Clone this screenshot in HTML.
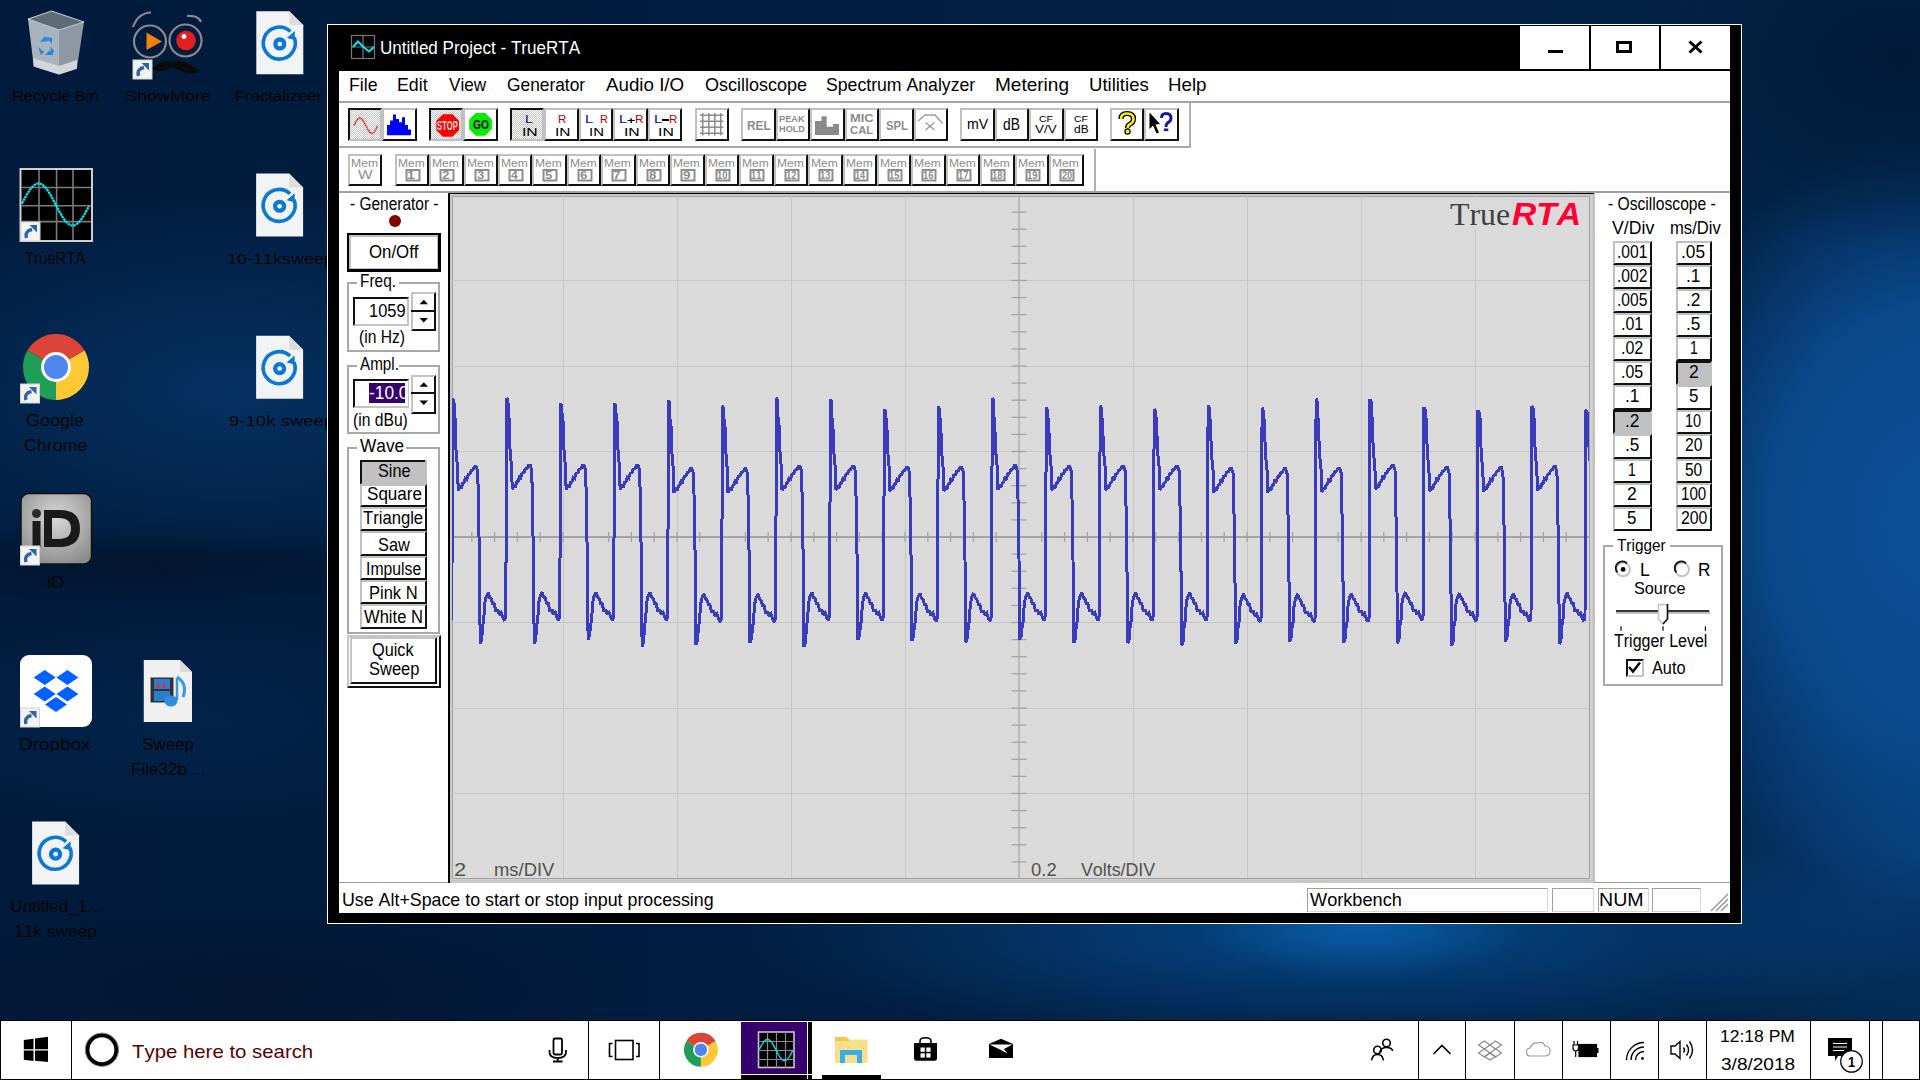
<!DOCTYPE html><html><head><meta charset="utf-8"><title>TrueRTA</title><style>
*{box-sizing:border-box;margin:0;padding:0}
html,body{width:1920px;height:1080px;overflow:hidden}
body{position:relative;font-family:'Liberation Sans',sans-serif;font-kerning:none;
background:
 radial-gradient(ellipse 170px 55px at 1365px 925px, rgba(10,100,178,0.75), rgba(10,100,178,0) 100%),
 radial-gradient(ellipse 600px 115px at 1340px 935px, rgba(5,72,136,0.95), rgba(5,72,136,0) 100%),
 radial-gradient(ellipse 280px 190px at 1900px 60px, rgba(2,26,56,1), rgba(2,26,56,0) 100%),
 radial-gradient(ellipse 300px 390px at 1935px 520px, rgba(12,80,152,1) 0%, rgba(11,76,146,0.9) 55%, rgba(8,60,120,0) 100%),
 radial-gradient(ellipse 300px 230px at 1920px 850px, rgba(6,62,120,0.9), rgba(6,62,120,0) 100%),
 radial-gradient(ellipse 330px 40px at 160px 565px, rgba(1,18,40,0.75), rgba(1,18,40,0) 100%),
 radial-gradient(ellipse 420px 200px at 230px 390px, rgba(5,50,100,0.95), rgba(5,50,100,0) 100%),
 radial-gradient(ellipse 320px 110px at 170px 720px, rgba(3,38,78,0.8), rgba(3,38,78,0) 100%),
 radial-gradient(ellipse 380px 90px at 250px 990px, rgba(1,20,44,0.8), rgba(1,20,44,0) 100%),
 linear-gradient(90deg, #021b3c 0%, #021d40 45%, #022448 100%);}
.t{position:absolute;white-space:nowrap;transform-origin:0 0;font-family:'Liberation Sans',sans-serif;font-kerning:none}
.r{position:absolute}
.ov{position:absolute;left:0;top:0;width:1920px;height:1080px;overflow:visible}
</style></head><body><svg class="ov" width="1920" height="1080" viewBox="0 0 1920 1080"><path d="M28 19 L51.5 11 L84 22 L59 30 Z" fill="#5f6b78"/><path d="M28 19 L59 30 L59 74.5 L33.8 66.5 Z" fill="#a9b3bd"/><path d="M59 30 L84 22 L76.8 68.8 L59 74.5 Z" fill="#8e98a3"/><path d="M33 58 L59 66 L77 60 L76.8 68.8 L59 74.5 L33.8 66.5 Z" fill="#d2d6da"/><path d="M28 19 L51.5 11 L84 22 L59 30 Z" fill="none" stroke="#c9d0d6" stroke-width="1"/><g fill="#1e88e5"><path d="M40 42 L45 36 L49 41 Z"/><path d="M46 37 L52 38 L52 44 Z"/><path d="M38 47 L44 52 L41 55 Z"/><path d="M45 55 L53 55 L50 50 Z"/><path d="M50 46 L54 51 L52 55 Z"/></g><g fill="none" stroke="#8a8a8a" stroke-width="2.2"><circle cx="150" cy="41.5" r="16"/><circle cx="185.5" cy="40.5" r="16"/><path d="M133 27 Q138 13 151 12.5"/><path d="M187 16 Q198 15 201 22"/></g><path d="M146.5 32.5 L162 41.5 L146.5 50 Z" fill="#f0820a"/><circle cx="186" cy="40.5" r="9.8" fill="#e02020"/><circle cx="184" cy="36.5" r="2.4" fill="#fff"/><path d="M152 68 Q165 58 172 63 Q180 58 192 66 Q199 72 202 69 Q196 76 184 72 Q176 69 172 67 Q165 73 152 70 Z" fill="#0a0a0a"/><rect x="133.0" y="60.0" width="19" height="19" fill="#f3f3f3" stroke="#d4d4d4" stroke-width="1"/><path d="M138.5 76.0 Q136.5 69.0 144.0 67.5" fill="none" stroke="#2f62ad" stroke-width="3.4"/><path d="M141.5 63.0 L149.0 63.0 L149.0 70.5 Z" fill="#2f62ad"/><path d="M256.3 11.2 L289.3 11.2 L303.3 25.2 L303.3 74.2 L256.3 74.2 Z" fill="#f2f3f5"/><path d="M289.3 11.2 L289.3 25.2 L303.3 25.2 Z" fill="#dcdde0"/><path d="M290.3 31.459999999999994 A16 16 0 1 0 294.3 37.459999999999994" fill="none" stroke="#0b78d6" stroke-width="3.6"/><path d="M286.8 37.959999999999994 L294.8 30.959999999999994 L294.8 39.959999999999994 Z" fill="#0b78d6"/><circle cx="279.8" cy="43.959999999999994" r="6.6" fill="#0b78d6"/><circle cx="279.8" cy="43.959999999999994" r="2.3" fill="#fff"/><path d="M256.1 173.5 L289.1 173.5 L303.1 187.5 L303.1 236.5 L256.1 236.5 Z" fill="#f2f3f5"/><path d="M289.1 173.5 L289.1 187.5 L303.1 187.5 Z" fill="#dcdde0"/><path d="M290.1 193.76 A16 16 0 1 0 294.1 199.76" fill="none" stroke="#0b78d6" stroke-width="3.6"/><path d="M286.6 200.26 L294.6 193.26 L294.6 202.26 Z" fill="#0b78d6"/><circle cx="279.6" cy="206.26" r="6.6" fill="#0b78d6"/><circle cx="279.6" cy="206.26" r="2.3" fill="#fff"/><path d="M256.1 335.8 L289.1 335.8 L303.1 349.8 L303.1 398.8 L256.1 398.8 Z" fill="#f2f3f5"/><path d="M289.1 335.8 L289.1 349.8 L303.1 349.8 Z" fill="#dcdde0"/><path d="M290.1 356.06 A16 16 0 1 0 294.1 362.06" fill="none" stroke="#0b78d6" stroke-width="3.6"/><path d="M286.6 362.56 L294.6 355.56 L294.6 364.56 Z" fill="#0b78d6"/><circle cx="279.6" cy="368.56" r="6.6" fill="#0b78d6"/><circle cx="279.6" cy="368.56" r="2.3" fill="#fff"/><path d="M32.1 821.4 L65.1 821.4 L79.1 835.4 L79.1 884.4 L32.1 884.4 Z" fill="#f2f3f5"/><path d="M65.1 821.4 L65.1 835.4 L79.1 835.4 Z" fill="#dcdde0"/><path d="M66.1 841.66 A16 16 0 1 0 70.1 847.66" fill="none" stroke="#0b78d6" stroke-width="3.6"/><path d="M62.6 848.16 L70.6 841.16 L70.6 850.16 Z" fill="#0b78d6"/><circle cx="55.6" cy="854.16" r="6.6" fill="#0b78d6"/><circle cx="55.6" cy="854.16" r="2.3" fill="#fff"/><rect x="20.5" y="169" width="71.5" height="72" fill="#000" stroke="#cfcfcf" stroke-width="2"/><g stroke="#7a7a7a" stroke-width="1.6"><line x1="39" y1="170" x2="39" y2="240"/><line x1="56.6" y1="170" x2="56.6" y2="240"/><line x1="73" y1="170" x2="73" y2="240"/><line x1="21" y1="187.5" x2="91" y2="187.5"/><line x1="21" y1="205.8" x2="91" y2="205.8"/><line x1="21" y1="221.6" x2="91" y2="221.6"/></g><polyline points="22.0,203.5 23.0,201.5 24.0,199.6 25.0,197.8 26.0,196.0 27.0,194.3 28.0,192.6 29.0,191.1 30.0,189.7 31.0,188.4 32.0,187.2 33.0,186.2 34.0,185.3 35.0,184.6 36.0,184.1 37.0,183.7 38.0,183.5 39.0,183.5 40.0,183.7 41.0,184.0 42.0,184.5 43.0,185.2 44.0,186.1 45.0,187.1 46.0,188.2 47.0,189.5 48.0,190.9 49.0,192.5 50.0,194.1 51.0,195.8 52.0,197.6 53.0,199.5 54.0,201.3 55.0,203.3 56.0,205.2 57.0,207.1 58.0,209.0 59.0,210.9 60.0,212.7 61.0,214.4 62.0,216.1 63.0,217.6 64.0,219.1 65.0,220.4 66.0,221.6 67.0,222.7 68.0,223.5 69.0,224.3 70.0,224.8 71.0,225.2 72.0,225.5 73.0,225.5 74.0,225.4 75.0,225.0 76.0,224.6 77.0,223.9 78.0,223.1 79.0,222.1 80.0,221.0 81.0,219.7 82.0,218.3 83.0,216.8 84.0,215.2 85.0,213.5 86.0,211.7 87.0,209.9 88.0,208.0 89.0,206.1" fill="none" stroke="#00f0ff" stroke-width="2.2" stroke-dasharray="2.5 0.6"/><rect x="21.0" y="222.0" width="19" height="19" fill="#f3f3f3" stroke="#d4d4d4" stroke-width="1"/><path d="M26.5 238.0 Q24.5 231.0 32.0 229.5" fill="none" stroke="#2f62ad" stroke-width="3.4"/><path d="M29.5 225.0 L37.0 225.0 L37.0 232.5 Z" fill="#2f62ad"/><path d="M56 367 L27.42 350.50 A33 33 0 0 1 84.58 350.50 Z" fill="#db4437"/><path d="M56 367 L84.58 350.50 A33 33 0 0 1 56.00 400.00 Z" fill="#fcc934"/><path d="M56 367 L56.00 400.00 A33 33 0 0 1 27.42 350.50 Z" fill="#1e9e57"/><circle cx="56" cy="367" r="15" fill="#fff"/><circle cx="56" cy="367" r="12" fill="#4f86ec"/><rect x="20.5" y="384.0" width="19" height="19" fill="#f3f3f3" stroke="#d4d4d4" stroke-width="1"/><path d="M26 400.0 Q24 393.0 31.5 391.5" fill="none" stroke="#2f62ad" stroke-width="3.4"/><path d="M29 387.0 L36.5 387.0 L36.5 394.5 Z" fill="#2f62ad"/><defs><radialGradient id="idg" cx="0.5" cy="0.35" r="0.7"><stop offset="0" stop-color="#d8d8d8"/><stop offset="1" stop-color="#8c8c8c"/></radialGradient></defs><rect x="21" y="493.5" width="70.5" height="70.5" rx="8" fill="url(#idg)" stroke="#111" stroke-width="1.5"/><circle cx="36.5" cy="513.5" r="4.5" fill="#2a2a2a"/><rect x="32.5" y="521" width="8" height="26" fill="#1a1a1a"/><path d="M44 510 L60 510 Q80 510 80 528.5 Q80 547 60 547 L44 547 Z M52 518 L52 539 L59 539 Q71 539 71 528.5 Q71 518 59 518 Z" fill="#1a1a1a" fill-rule="evenodd"/><rect x="20.5" y="546.0" width="19" height="19" fill="#f3f3f3" stroke="#d4d4d4" stroke-width="1"/><path d="M26 562.0 Q24 555.0 31.5 553.5" fill="none" stroke="#2f62ad" stroke-width="3.4"/><path d="M29 549.0 L36.5 549.0 L36.5 556.5 Z" fill="#2f62ad"/><rect x="20" y="655" width="72" height="72" rx="9" fill="#fff"/><path d="M33.7 677.5 L44.7 670.0 L55.7 677.5 L44.7 685.0 Z" fill="#0061fe"/><path d="M56.400000000000006 677.5 L67.4 670.0 L78.4 677.5 L67.4 685.0 Z" fill="#0061fe"/><path d="M33.7 694 L44.7 686.5 L55.7 694 L44.7 701.5 Z" fill="#0061fe"/><path d="M56.400000000000006 694 L67.4 686.5 L78.4 694 L67.4 701.5 Z" fill="#0061fe"/><path d="M45 704.6 L56 697.1 L67 704.6 L56 712.1 Z" fill="#0061fe"/><rect x="20.5" y="708.0" width="19" height="19" fill="#f3f3f3" stroke="#d4d4d4" stroke-width="1"/><path d="M26 724.0 Q24 717.0 31.5 715.5" fill="none" stroke="#2f62ad" stroke-width="3.4"/><path d="M29 711.0 L36.5 711.0 L36.5 718.5 Z" fill="#2f62ad"/><path d="M143.75 660 L180.0 660 L192.0 672 L192.0 722 L143.75 722 Z" fill="#f0f0f0"/><path d="M180.0 660 L180.0 672 L192.0 672 Z" fill="#dadada"/><rect x="150.5" y="677.5" width="23" height="25" fill="#333"/><rect x="154" y="679" width="16" height="10" fill="#2a7fd0"/><rect x="154" y="691" width="16" height="10" fill="#2a7fd0"/><path d="M156 688 L158 683 L160 688 Z M162 688 L164 681 L166 688 Z" fill="#e03030"/><path d="M177 678 L177 700" stroke="#3a9ae0" stroke-width="2.5"/><path d="M177 677 Q188 684 183 697" fill="none" stroke="#3a9ae0" stroke-width="3"/><ellipse cx="171" cy="701" rx="6.5" ry="5.5" fill="#2f8fdc"/></svg>
<div class="t" style="left:12.40px;top:88.49px;font-size:15.36px;line-height:15.36px;color:#050505;transform:scaleX(1.0684);">Recycle Bin</div>
<div class="t" style="left:125.18px;top:88.49px;font-size:15.36px;line-height:15.36px;color:#050505;transform:scaleX(1.1700);">ShowMore</div>
<div class="t" style="left:235.13px;top:88.39px;font-size:15.36px;line-height:15.36px;color:#050505;transform:scaleX(1.0859);">Fractalizeer</div>
<div class="t" style="left:25.17px;top:249.91px;font-size:16.06px;line-height:16.06px;color:#050505;transform:scaleX(0.9281);">TrueRTA</div>
<div class="t" style="left:226.63px;top:250.79px;font-size:15.36px;line-height:15.36px;color:#050505;transform:scaleX(1.1723);">10-11ksweep</div>
<div class="t" style="left:25.69px;top:412.11px;font-size:16.06px;line-height:16.06px;color:#050505;transform:scaleX(1.1219);">Google</div>
<div class="t" style="left:23.70px;top:436.81px;font-size:16.06px;line-height:16.06px;color:#050505;transform:scaleX(1.1080);">Chrome</div>
<div class="t" style="left:228.53px;top:412.79px;font-size:15.36px;line-height:15.36px;color:#050505;transform:scaleX(1.2083);">9-10k sweep</div>
<div class="t" style="left:46.59px;top:574.31px;font-size:16.06px;line-height:16.06px;color:#050505;transform:scaleX(1.1258);">iD</div>
<div class="t" style="left:19.25px;top:736.21px;font-size:16.06px;line-height:16.06px;color:#050505;transform:scaleX(1.1770);">Dropbox</div>
<div class="t" style="left:141.63px;top:736.21px;font-size:16.06px;line-height:16.06px;color:#050505;transform:scaleX(1.0607);">Sweep</div>
<div class="t" style="left:130.60px;top:760.91px;font-size:16.06px;line-height:16.06px;color:#050505;transform:scaleX(1.0628);">File32b ...</div>
<div class="t" style="left:9.67px;top:898.31px;font-size:16.06px;line-height:16.06px;color:#050505;transform:scaleX(1.0698);">Untitled_1...</div>
<div class="t" style="left:14.28px;top:922.91px;font-size:16.06px;line-height:16.06px;color:#050505;transform:scaleX(1.0816);">11k sweep</div>
<div class="r" style="left:327px;top:24px;width:1415px;height:900px;background:#000;border:1px solid #fff;"></div>
<div class="r" style="left:339px;top:71px;width:1391px;height:842px;background:#fff;"></div>
<div class="r" style="left:1520px;top:26px;width:69px;height:43px;background:#fff;"></div>
<div class="r" style="left:1591px;top:26px;width:68px;height:43px;background:#fff;"></div>
<div class="r" style="left:1661px;top:26px;width:69px;height:43px;background:#fff;"></div>
<div class="r" style="left:1548px;top:50px;width:15px;height:3px;background:#000;"></div>
<div class="r" style="left:1616px;top:41px;width:16px;height:12px;border:3px solid #000;"></div>
<div class="t" style="left:379.58px;top:39.82px;font-size:17.60px;line-height:17.60px;color:#fff;transform:scaleX(0.9700);">Untitled Project - TrueRTA</div>
<div class="t" style="left:348.85px;top:76.31px;font-size:18.44px;line-height:18.44px;color:#000;transform:scaleX(0.9607);">File</div>
<div class="t" style="left:396.54px;top:76.31px;font-size:18.44px;line-height:18.44px;color:#000;transform:scaleX(0.9628);">Edit</div>
<div class="t" style="left:448.72px;top:76.31px;font-size:18.44px;line-height:18.44px;color:#000;transform:scaleX(0.9293);">View</div>
<div class="t" style="left:506.93px;top:76.31px;font-size:18.44px;line-height:18.44px;color:#000;transform:scaleX(0.9404);">Generator</div>
<div class="t" style="left:606.26px;top:76.31px;font-size:18.44px;line-height:18.44px;color:#000;transform:scaleX(1.0166);">Audio I/O</div>
<div class="t" style="left:704.75px;top:76.31px;font-size:18.44px;line-height:18.44px;color:#000;transform:scaleX(0.9765);">Oscilloscope</div>
<div class="t" style="left:825.80px;top:76.31px;font-size:18.44px;line-height:18.44px;color:#000;transform:scaleX(0.9580);">Spectrum Analyzer</div>
<div class="t" style="left:994.74px;top:76.31px;font-size:18.44px;line-height:18.44px;color:#000;transform:scaleX(1.0315);">Metering</div>
<div class="t" style="left:1088.57px;top:76.31px;font-size:18.44px;line-height:18.44px;color:#000;transform:scaleX(1.0048);">Utilities</div>
<div class="t" style="left:1167.67px;top:76.31px;font-size:18.44px;line-height:18.44px;color:#000;transform:scaleX(1.0132);">Help</div>
<div class="r" style="left:339px;top:101px;width:1391px;height:2px;background:#a3a3a3;"></div>
<div class="r" style="left:339px;top:146px;width:851px;height:2px;background:#a8a8a8;"></div>
<div class="r" style="left:1189px;top:103px;width:2px;height:45px;background:#b0b0b0;"></div>
<div class="r" style="left:1094px;top:149px;width:2px;height:43px;background:#b0b0b0;"></div>
<div class="r" style="left:339px;top:191px;width:1391px;height:2px;background:#a0a0a0;"></div>
<div class="r" style="left:348px;top:108px;width:34px;height:33px;background-color:#fff;background-image:repeating-conic-gradient(#c4c4c4 0 25%, #fff 0 50%);background-size:2px 2px;border-style:solid;border-width:2px;border-color:#111 #c0c0c0 #c0c0c0 #111;"></div>
<div class="r" style="left:382px;top:108px;width:35px;height:33px;background:#fff;border-style:solid;border-width:2px;border-color:#c0c0c0 #111 #111 #c0c0c0;"></div>
<div class="r" style="left:429px;top:108px;width:34px;height:33px;background-color:#fff;background-image:repeating-conic-gradient(#c4c4c4 0 25%, #fff 0 50%);background-size:2px 2px;border-style:solid;border-width:2px;border-color:#111 #c0c0c0 #c0c0c0 #111;"></div>
<div class="r" style="left:463px;top:108px;width:35px;height:33px;background:#fff;border-style:solid;border-width:2px;border-color:#c0c0c0 #111 #111 #c0c0c0;"></div>
<div class="r" style="left:510px;top:108px;width:34px;height:33px;background-color:#fff;background-image:repeating-conic-gradient(#c4c4c4 0 25%, #fff 0 50%);background-size:2px 2px;border-style:solid;border-width:2px;border-color:#111 #c0c0c0 #c0c0c0 #111;"></div>
<div class="r" style="left:544px;top:108px;width:35px;height:33px;background:#fff;border-style:solid;border-width:2px;border-color:#c0c0c0 #111 #111 #c0c0c0;"></div>
<div class="r" style="left:579px;top:108px;width:34px;height:33px;background:#fff;border-style:solid;border-width:2px;border-color:#c0c0c0 #111 #111 #c0c0c0;"></div>
<div class="r" style="left:613px;top:108px;width:35px;height:33px;background:#fff;border-style:solid;border-width:2px;border-color:#c0c0c0 #111 #111 #c0c0c0;"></div>
<div class="r" style="left:648px;top:108px;width:34px;height:33px;background:#fff;border-style:solid;border-width:2px;border-color:#c0c0c0 #111 #111 #c0c0c0;"></div>
<div class="r" style="left:695px;top:108px;width:34px;height:33px;background:#fff;border-style:solid;border-width:2px;border-color:#c0c0c0 #111 #111 #c0c0c0;"></div>
<div class="r" style="left:741px;top:108px;width:35px;height:33px;background:#fff;border-style:solid;border-width:2px;border-color:#c0c0c0 #111 #111 #c0c0c0;"></div>
<div class="r" style="left:776px;top:108px;width:34px;height:33px;background:#fff;border-style:solid;border-width:2px;border-color:#c0c0c0 #111 #111 #c0c0c0;"></div>
<div class="r" style="left:810px;top:108px;width:35px;height:33px;background:#fff;border-style:solid;border-width:2px;border-color:#c0c0c0 #111 #111 #c0c0c0;"></div>
<div class="r" style="left:845px;top:108px;width:34px;height:33px;background:#fff;border-style:solid;border-width:2px;border-color:#c0c0c0 #111 #111 #c0c0c0;"></div>
<div class="r" style="left:879px;top:108px;width:35px;height:33px;background:#fff;border-style:solid;border-width:2px;border-color:#c0c0c0 #111 #111 #c0c0c0;"></div>
<div class="r" style="left:914px;top:108px;width:34px;height:33px;background:#fff;border-style:solid;border-width:2px;border-color:#c0c0c0 #111 #111 #c0c0c0;"></div>
<div class="r" style="left:960px;top:108px;width:35px;height:33px;background:#fff;border-style:solid;border-width:2px;border-color:#c0c0c0 #111 #111 #c0c0c0;"></div>
<div class="r" style="left:995px;top:108px;width:34px;height:33px;background:#fff;border-style:solid;border-width:2px;border-color:#c0c0c0 #111 #111 #c0c0c0;"></div>
<div class="r" style="left:1029px;top:108px;width:35px;height:33px;background:#fff;border-style:solid;border-width:2px;border-color:#c0c0c0 #111 #111 #c0c0c0;"></div>
<div class="r" style="left:1064px;top:108px;width:34px;height:33px;background:#fff;border-style:solid;border-width:2px;border-color:#c0c0c0 #111 #111 #c0c0c0;"></div>
<div class="r" style="left:1110px;top:108px;width:34px;height:33px;background:#fff;border-style:solid;border-width:2px;border-color:#c0c0c0 #111 #111 #c0c0c0;"></div>
<div class="r" style="left:1144px;top:108px;width:35px;height:33px;background:#fff;border-style:solid;border-width:2px;border-color:#c0c0c0 #111 #111 #c0c0c0;"></div>
<div class="r" style="left:348px;top:154px;width:34px;height:32px;background:#fff;border-style:solid;border-width:2px;border-color:#c0c0c0 #111 #111 #c0c0c0;"></div>
<div class="r" style="left:395px;top:154px;width:34px;height:32px;background:#fff;border-style:solid;border-width:2px;border-color:#c0c0c0 #111 #111 #c0c0c0;"></div>
<div class="r" style="left:429px;top:154px;width:35px;height:32px;background:#fff;border-style:solid;border-width:2px;border-color:#c0c0c0 #111 #111 #c0c0c0;"></div>
<div class="r" style="left:464px;top:154px;width:34px;height:32px;background:#fff;border-style:solid;border-width:2px;border-color:#c0c0c0 #111 #111 #c0c0c0;"></div>
<div class="r" style="left:498px;top:154px;width:34px;height:32px;background:#fff;border-style:solid;border-width:2px;border-color:#c0c0c0 #111 #111 #c0c0c0;"></div>
<div class="r" style="left:532px;top:154px;width:35px;height:32px;background:#fff;border-style:solid;border-width:2px;border-color:#c0c0c0 #111 #111 #c0c0c0;"></div>
<div class="r" style="left:567px;top:154px;width:34px;height:32px;background:#fff;border-style:solid;border-width:2px;border-color:#c0c0c0 #111 #111 #c0c0c0;"></div>
<div class="r" style="left:601px;top:154px;width:35px;height:32px;background:#fff;border-style:solid;border-width:2px;border-color:#c0c0c0 #111 #111 #c0c0c0;"></div>
<div class="r" style="left:636px;top:154px;width:34px;height:32px;background:#fff;border-style:solid;border-width:2px;border-color:#c0c0c0 #111 #111 #c0c0c0;"></div>
<div class="r" style="left:670px;top:154px;width:35px;height:32px;background:#fff;border-style:solid;border-width:2px;border-color:#c0c0c0 #111 #111 #c0c0c0;"></div>
<div class="r" style="left:705px;top:154px;width:34px;height:32px;background:#fff;border-style:solid;border-width:2px;border-color:#c0c0c0 #111 #111 #c0c0c0;"></div>
<div class="r" style="left:739px;top:154px;width:35px;height:32px;background:#fff;border-style:solid;border-width:2px;border-color:#c0c0c0 #111 #111 #c0c0c0;"></div>
<div class="r" style="left:774px;top:154px;width:34px;height:32px;background:#fff;border-style:solid;border-width:2px;border-color:#c0c0c0 #111 #111 #c0c0c0;"></div>
<div class="r" style="left:808px;top:154px;width:35px;height:32px;background:#fff;border-style:solid;border-width:2px;border-color:#c0c0c0 #111 #111 #c0c0c0;"></div>
<div class="r" style="left:843px;top:154px;width:34px;height:32px;background:#fff;border-style:solid;border-width:2px;border-color:#c0c0c0 #111 #111 #c0c0c0;"></div>
<div class="r" style="left:877px;top:154px;width:34px;height:32px;background:#fff;border-style:solid;border-width:2px;border-color:#c0c0c0 #111 #111 #c0c0c0;"></div>
<div class="r" style="left:911px;top:154px;width:35px;height:32px;background:#fff;border-style:solid;border-width:2px;border-color:#c0c0c0 #111 #111 #c0c0c0;"></div>
<div class="r" style="left:946px;top:154px;width:34px;height:32px;background:#fff;border-style:solid;border-width:2px;border-color:#c0c0c0 #111 #111 #c0c0c0;"></div>
<div class="r" style="left:980px;top:154px;width:35px;height:32px;background:#fff;border-style:solid;border-width:2px;border-color:#c0c0c0 #111 #111 #c0c0c0;"></div>
<div class="r" style="left:1015px;top:154px;width:34px;height:32px;background:#fff;border-style:solid;border-width:2px;border-color:#c0c0c0 #111 #111 #c0c0c0;"></div>
<div class="r" style="left:1049px;top:154px;width:35px;height:32px;background:#fff;border-style:solid;border-width:2px;border-color:#c0c0c0 #111 #111 #c0c0c0;"></div>
<div class="t" style="left:350.21px;top:195.27px;font-size:18.02px;line-height:18.02px;color:#000;transform:scaleX(0.8579);">- Generator -</div>
<div class="r" style="left:388.5px;top:214.8px;width:12px;height:12px;border-radius:50%;background:#800000"></div>
<div class="r" style="left:347px;top:233px;width:94px;height:39px;background:#fff;border-style:solid;border-color:#000;border-width:2px 3px 3px 2px;box-shadow:inset 2px 2px 0 #c0c0c0, inset -1px -1px 0 #c0c0c0;"></div>
<div class="t" style="left:369.20px;top:242.91px;font-size:18.85px;line-height:18.85px;color:#000;transform:scaleX(0.8927);">On/Off</div>
<div class="r" style="left:347px;top:282px;width:93px;height:70px;border:2px solid #a8a8a8;"></div>
<div class="r" style="left:357px;top:281px;width:42px;height:4px;background:#fff;"></div>
<div class="t" style="left:360.03px;top:273.28px;font-size:17.88px;line-height:17.88px;color:#000;transform:scaleX(0.8647);">Freq.</div>
<div class="r" style="left:353px;top:297px;width:56px;height:29px;background:#fff;border-style:solid;border-width:2px;border-color:#111 #c4c4c4 #c4c4c4 #111;"></div>
<div class="t" style="left:369.25px;top:301.51px;font-size:18.44px;line-height:18.44px;color:#000;transform:scaleX(0.8907);">1059</div>
<div class="r" style="left:411px;top:292px;width:25px;height:39px;background:#fff;border-style:solid;border-width:2px;border-color:#c4c4c4 #111 #111 #c4c4c4;"></div>
<div class="r" style="left:411px;top:309.5px;width:25px;height:2px;background:#111;"></div>
<div class="r" style="left:347px;top:365px;width:93px;height:69px;border:2px solid #a8a8a8;"></div>
<div class="r" style="left:357px;top:364px;width:42px;height:4px;background:#fff;"></div>
<div class="t" style="left:359.97px;top:355.74px;font-size:17.46px;line-height:17.46px;color:#000;transform:scaleX(0.8745);">Ampl.</div>
<div class="r" style="left:353px;top:379px;width:56px;height:29px;background:#fff;border-style:solid;border-width:2px;border-color:#111 #c4c4c4 #c4c4c4 #111;"></div>
<div class="r" style="left:369px;top:383px;width:35.5px;height:19.5px;background:#36006e;"></div>
<div class="t" style="left:369.23px;top:384.72px;font-size:17.60px;line-height:17.60px;color:#fff;transform:scaleX(0.9834);clip-path:inset(0 0 0 0);">-10.0</div>
<div class="r" style="left:404.5px;top:381px;width:3px;height:25px;background:#fff;"></div>
<div class="r" style="left:411px;top:374.5px;width:25px;height:39px;background:#fff;border-style:solid;border-width:2px;border-color:#c4c4c4 #111 #111 #c4c4c4;"></div>
<div class="r" style="left:411px;top:392px;width:25px;height:2px;background:#111;"></div>
<div class="t" style="left:358.73px;top:329.09px;font-size:17.46px;line-height:17.46px;color:#000;transform:scaleX(0.8957);">(in Hz)</div>
<div class="t" style="left:352.83px;top:411.59px;font-size:17.46px;line-height:17.46px;color:#000;transform:scaleX(0.8980);">(in dBu)</div>
<div class="r" style="left:347px;top:447px;width:93px;height:187px;border:2px solid #a8a8a8;"></div>
<div class="r" style="left:357px;top:446px;width:49px;height:4px;background:#fff;"></div>
<div class="t" style="left:360.32px;top:438.38px;font-size:17.88px;line-height:17.88px;color:#000;transform:scaleX(0.9660);">Wave</div>
<div class="r" style="left:360px;top:460px;width:67px;height:25px;background:#c0c0c0;border-style:solid;border-width:2px;border-color:#111 #c0c0c0 #c0c0c0 #111;"></div>
<div class="r" style="left:425px;top:460px;width:2px;height:25px;background:#c0c0c0;"></div>
<div class="r" style="left:360px;top:484px;width:67px;height:23px;background:#fff;border-style:solid;border-width:2px;border-color:#c0c0c0 #111 #111 #c0c0c0;"></div>
<div class="r" style="left:360px;top:507px;width:67px;height:24px;background:#fff;border-style:solid;border-width:2px;border-color:#c0c0c0 #111 #111 #c0c0c0;"></div>
<div class="r" style="left:360px;top:531px;width:67px;height:25px;background:#fff;border-style:solid;border-width:2px;border-color:#c0c0c0 #111 #111 #c0c0c0;"></div>
<div class="r" style="left:360px;top:556px;width:67px;height:24px;background:#fff;border-style:solid;border-width:2px;border-color:#c0c0c0 #111 #111 #c0c0c0;"></div>
<div class="r" style="left:360px;top:580px;width:67px;height:24px;background:#fff;border-style:solid;border-width:2px;border-color:#c0c0c0 #111 #111 #c0c0c0;"></div>
<div class="r" style="left:360px;top:604px;width:67px;height:25px;background:#fff;border-style:solid;border-width:2px;border-color:#c0c0c0 #111 #111 #c0c0c0;"></div>
<div class="t" style="left:377.96px;top:462.27px;font-size:18.02px;line-height:18.02px;color:#000;transform:scaleX(0.9030);">Sine</div>
<div class="t" style="left:366.73px;top:485.47px;font-size:18.02px;line-height:18.02px;color:#000;transform:scaleX(0.9473);">Square</div>
<div class="t" style="left:362.63px;top:509.37px;font-size:18.02px;line-height:18.02px;color:#000;transform:scaleX(0.9235);">Triangle</div>
<div class="t" style="left:377.96px;top:535.77px;font-size:18.02px;line-height:18.02px;color:#000;transform:scaleX(0.9074);">Saw</div>
<div class="t" style="left:365.55px;top:559.67px;font-size:18.02px;line-height:18.02px;color:#000;transform:scaleX(0.8743);">Impulse</div>
<div class="t" style="left:368.65px;top:583.62px;font-size:18.02px;line-height:18.02px;color:#000;transform:scaleX(0.9158);">Pink N</div>
<div class="t" style="left:364.43px;top:607.57px;font-size:18.02px;line-height:18.02px;color:#000;transform:scaleX(0.9197);">White N</div>
<div class="r" style="left:347px;top:635px;width:94px;height:53px;background:#fff;border-style:solid;border-width:2px;border-color:#c4c4c4 #111 #111 #c4c4c4;"></div>
<div class="r" style="left:350px;top:637px;width:87px;height:47px;border-style:solid;border-width:2px;border-color:#c4c4c4 #111 #111 #c4c4c4;"></div>
<div class="t" style="left:372.23px;top:640.87px;font-size:18.02px;line-height:18.02px;color:#000;transform:scaleX(0.9043);">Quick</div>
<div class="t" style="left:369.25px;top:660.27px;font-size:18.02px;line-height:18.02px;color:#000;transform:scaleX(0.9157);">Sweep</div>
<div class="r" style="left:339px;top:882px;width:1391px;height:1px;background:#9a9a9a;"></div>
<div class="r" style="left:448px;top:193px;width:1146px;height:690px;background:#c6c6c6;border-left:2px solid #000;border-top:1px solid #000;"></div>
<div class="r" style="left:452px;top:196px;width:1138px;height:683px;background:#dadada;border-style:solid;border-width:1px;border-color:#a8a8a8 #a0a0a0 #a0a0a0 #a8a8a8;"></div>
<div class="r" style="left:1590px;top:196px;width:2px;height:686px;background:#d0d0d0;"></div>
<div class="r" style="left:452px;top:879px;width:1140px;height:1px;background:#d0d0d0;"></div>
<div class="r" style="left:1594px;top:192px;width:1px;height:690px;background:#c0c0c0;"></div>
<div class="t" style="left:1607.70px;top:195.31px;font-size:18.44px;line-height:18.44px;color:#000;transform:scaleX(0.8485);">- Oscilloscope -</div>
<div class="t" style="left:1611.52px;top:219.27px;font-size:18.02px;line-height:18.02px;color:#000;transform:scaleX(0.9813);">V/Div</div>
<div class="t" style="left:1670.20px;top:219.27px;font-size:18.02px;line-height:18.02px;color:#000;transform:scaleX(0.9222);">ms/Div</div>
<div class="r" style="left:1613px;top:241px;width:39px;height:24px;background:#fff;border-style:solid;border-width:2px;border-color:#c0c0c0 #111 #111 #c0c0c0;"></div>
<div class="r" style="left:1676px;top:241px;width:36px;height:24px;background:#fff;border-style:solid;border-width:2px;border-color:#c0c0c0 #111 #111 #c0c0c0;"></div>
<div class="r" style="left:1613px;top:265px;width:39px;height:24px;background:#fff;border-style:solid;border-width:2px;border-color:#c0c0c0 #111 #111 #c0c0c0;"></div>
<div class="r" style="left:1676px;top:265px;width:36px;height:24px;background:#fff;border-style:solid;border-width:2px;border-color:#c0c0c0 #111 #111 #c0c0c0;"></div>
<div class="r" style="left:1613px;top:289px;width:39px;height:24px;background:#fff;border-style:solid;border-width:2px;border-color:#c0c0c0 #111 #111 #c0c0c0;"></div>
<div class="r" style="left:1676px;top:289px;width:36px;height:24px;background:#fff;border-style:solid;border-width:2px;border-color:#c0c0c0 #111 #111 #c0c0c0;"></div>
<div class="r" style="left:1613px;top:313px;width:39px;height:24px;background:#fff;border-style:solid;border-width:2px;border-color:#c0c0c0 #111 #111 #c0c0c0;"></div>
<div class="r" style="left:1676px;top:313px;width:36px;height:24px;background:#fff;border-style:solid;border-width:2px;border-color:#c0c0c0 #111 #111 #c0c0c0;"></div>
<div class="r" style="left:1613px;top:337px;width:39px;height:24px;background:#fff;border-style:solid;border-width:2px;border-color:#c0c0c0 #111 #111 #c0c0c0;"></div>
<div class="r" style="left:1676px;top:337px;width:36px;height:24px;background:#fff;border-style:solid;border-width:2px;border-color:#c0c0c0 #111 #111 #c0c0c0;"></div>
<div class="r" style="left:1613px;top:361px;width:39px;height:24px;background:#fff;border-style:solid;border-width:2px;border-color:#c0c0c0 #111 #111 #c0c0c0;"></div>
<div class="r" style="left:1676px;top:361px;width:36px;height:24px;background:#c0c0c0;border-style:solid;border-width:2px;border-color:#111 #c0c0c0 #c0c0c0 #111;"></div>
<div class="r" style="left:1613px;top:385px;width:39px;height:25px;background:#fff;border-style:solid;border-width:2px;border-color:#c0c0c0 #111 #111 #c0c0c0;"></div>
<div class="r" style="left:1676px;top:385px;width:36px;height:25px;background:#fff;border-style:solid;border-width:2px;border-color:#c0c0c0 #111 #111 #c0c0c0;"></div>
<div class="r" style="left:1613px;top:410px;width:39px;height:24px;background:#c0c0c0;border-style:solid;border-width:2px;border-color:#111 #c0c0c0 #c0c0c0 #111;"></div>
<div class="r" style="left:1676px;top:410px;width:36px;height:24px;background:#fff;border-style:solid;border-width:2px;border-color:#c0c0c0 #111 #111 #c0c0c0;"></div>
<div class="r" style="left:1613px;top:434px;width:39px;height:25px;background:#fff;border-style:solid;border-width:2px;border-color:#c0c0c0 #111 #111 #c0c0c0;"></div>
<div class="r" style="left:1676px;top:434px;width:36px;height:25px;background:#fff;border-style:solid;border-width:2px;border-color:#c0c0c0 #111 #111 #c0c0c0;"></div>
<div class="r" style="left:1613px;top:459px;width:39px;height:24px;background:#fff;border-style:solid;border-width:2px;border-color:#c0c0c0 #111 #111 #c0c0c0;"></div>
<div class="r" style="left:1676px;top:459px;width:36px;height:24px;background:#fff;border-style:solid;border-width:2px;border-color:#c0c0c0 #111 #111 #c0c0c0;"></div>
<div class="r" style="left:1613px;top:483px;width:39px;height:24px;background:#fff;border-style:solid;border-width:2px;border-color:#c0c0c0 #111 #111 #c0c0c0;"></div>
<div class="r" style="left:1676px;top:483px;width:36px;height:24px;background:#fff;border-style:solid;border-width:2px;border-color:#c0c0c0 #111 #111 #c0c0c0;"></div>
<div class="r" style="left:1613px;top:507px;width:39px;height:24px;background:#fff;border-style:solid;border-width:2px;border-color:#c0c0c0 #111 #111 #c0c0c0;"></div>
<div class="r" style="left:1676px;top:507px;width:36px;height:24px;background:#fff;border-style:solid;border-width:2px;border-color:#c0c0c0 #111 #111 #c0c0c0;"></div>
<div class="t" style="left:1616.72px;top:243.72px;font-size:17.60px;line-height:17.60px;color:#000;transform:scaleX(0.8904);">.001</div>
<div class="t" style="left:1681.37px;top:243.72px;font-size:17.60px;line-height:17.60px;color:#000;transform:scaleX(0.9811);">.05</div>
<div class="t" style="left:1616.72px;top:267.72px;font-size:17.60px;line-height:17.60px;color:#000;transform:scaleX(0.8911);">.002</div>
<div class="t" style="left:1686.22px;top:267.72px;font-size:17.60px;line-height:17.60px;color:#000;transform:scaleX(0.9828);">.1</div>
<div class="t" style="left:1616.72px;top:291.72px;font-size:17.60px;line-height:17.60px;color:#000;transform:scaleX(0.8870);">.005</div>
<div class="t" style="left:1686.22px;top:291.72px;font-size:17.60px;line-height:17.60px;color:#000;transform:scaleX(0.9849);">.2</div>
<div class="t" style="left:1620.84px;top:315.72px;font-size:17.60px;line-height:17.60px;color:#000;transform:scaleX(0.9092);">.01</div>
<div class="t" style="left:1686.24px;top:315.72px;font-size:17.60px;line-height:17.60px;color:#000;transform:scaleX(0.9732);">.5</div>
<div class="t" style="left:1620.84px;top:339.72px;font-size:17.60px;line-height:17.60px;color:#000;transform:scaleX(0.9103);">.02</div>
<div class="t" style="left:1689.74px;top:339.72px;font-size:17.60px;line-height:17.60px;color:#000;transform:scaleX(0.7908);">1</div>
<div class="t" style="left:1620.85px;top:363.72px;font-size:17.60px;line-height:17.60px;color:#000;transform:scaleX(0.9043);">.05</div>
<div class="t" style="left:1688.92px;top:363.72px;font-size:17.60px;line-height:17.60px;color:#000;transform:scaleX(0.9979);">2</div>
<div class="t" style="left:1624.72px;top:387.72px;font-size:17.60px;line-height:17.60px;color:#000;transform:scaleX(0.9828);">.1</div>
<div class="t" style="left:1689.12px;top:387.72px;font-size:17.60px;line-height:17.60px;color:#000;transform:scaleX(0.9588);">5</div>
<div class="t" style="left:1624.72px;top:412.72px;font-size:17.60px;line-height:17.60px;color:#000;transform:scaleX(0.9849);">.2</div>
<div class="t" style="left:1685.44px;top:412.72px;font-size:17.60px;line-height:17.60px;color:#000;transform:scaleX(0.8264);">10</div>
<div class="t" style="left:1624.74px;top:436.72px;font-size:17.60px;line-height:17.60px;color:#000;transform:scaleX(0.9732);">.5</div>
<div class="t" style="left:1685.01px;top:436.72px;font-size:17.60px;line-height:17.60px;color:#000;transform:scaleX(0.8888);">20</div>
<div class="t" style="left:1627.74px;top:461.72px;font-size:17.60px;line-height:17.60px;color:#000;transform:scaleX(0.7908);">1</div>
<div class="t" style="left:1685.18px;top:461.72px;font-size:17.60px;line-height:17.60px;color:#000;transform:scaleX(0.8800);">50</div>
<div class="t" style="left:1626.92px;top:485.72px;font-size:17.60px;line-height:17.60px;color:#000;transform:scaleX(0.9979);">2</div>
<div class="t" style="left:1680.90px;top:485.72px;font-size:17.60px;line-height:17.60px;color:#000;transform:scaleX(0.8598);">100</div>
<div class="t" style="left:1627.12px;top:509.72px;font-size:17.60px;line-height:17.60px;color:#000;transform:scaleX(0.9588);">5</div>
<div class="t" style="left:1680.50px;top:509.72px;font-size:17.60px;line-height:17.60px;color:#000;transform:scaleX(0.8996);">200</div>
<div class="r" style="left:1603px;top:545px;width:120px;height:141px;border:2px solid #a8a8a8;"></div>
<div class="r" style="left:1613px;top:540px;width:57px;height:8px;background:#fff;"></div>
<div class="t" style="left:1617.26px;top:536.82px;font-size:17.18px;line-height:17.18px;color:#000;transform:scaleX(0.8931);">Trigger</div>
<div class="t" style="left:1639.75px;top:561.62px;font-size:17.60px;line-height:17.60px;color:#000;transform:scaleX(1.0053);">L</div>
<div class="t" style="left:1698.09px;top:561.62px;font-size:17.60px;line-height:17.60px;color:#000;transform:scaleX(0.9762);">R</div>
<div class="t" style="left:1634.26px;top:580.07px;font-size:17.18px;line-height:17.18px;color:#000;transform:scaleX(0.9454);">Source</div>
<div class="t" style="left:1614.14px;top:632.52px;font-size:17.60px;line-height:17.60px;color:#000;transform:scaleX(0.9097);">Trigger Level</div>
<div class="t" style="left:1652.17px;top:658.51px;font-size:18.44px;line-height:18.44px;color:#000;transform:scaleX(0.8838);">Auto</div>
<div class="r" style="left:1625.5px;top:658.5px;width:18.5px;height:18px;background:#fff;border-style:solid;border-width:2px;border-color:#111 #c4c4c4 #c4c4c4 #111;"></div>
<div class="t" style="left:341.53px;top:891.45px;font-size:18.16px;line-height:18.16px;color:#000;transform:scaleX(0.9806);">Use Alt+Space to start or stop input processing</div>
<div class="r" style="left:1307px;top:888px;width:241px;height:24px;border-style:solid;border-width:1px;border-color:#a0a0a0 #d8d8d8 #d8d8d8 #a0a0a0;"></div>
<div class="r" style="left:1552px;top:888px;width:42px;height:24px;border-style:solid;border-width:1px;border-color:#a0a0a0 #d8d8d8 #d8d8d8 #a0a0a0;"></div>
<div class="r" style="left:1598px;top:888px;width:51px;height:24px;border-style:solid;border-width:1px;border-color:#a0a0a0 #d8d8d8 #d8d8d8 #a0a0a0;"></div>
<div class="r" style="left:1652px;top:888px;width:49px;height:24px;border-style:solid;border-width:1px;border-color:#a0a0a0 #d8d8d8 #d8d8d8 #a0a0a0;"></div>
<div class="t" style="left:1309.92px;top:891.45px;font-size:18.16px;line-height:18.16px;color:#000;transform:scaleX(1.0003);">Workbench</div>
<div class="t" style="left:1599.29px;top:891.45px;font-size:18.16px;line-height:18.16px;color:#000;transform:scaleX(1.0790);">NUM</div>
<div class="r" style="left:0px;top:1020px;width:1920px;height:60px;background:#fff;border-top:1px solid #000;border-bottom:1px solid #000;border-left:1px solid #000;"></div>
<div class="r" style="left:71px;top:1020px;width:1px;height:60px;background:#000;"></div>
<div class="r" style="left:588px;top:1020px;width:1px;height:60px;background:#000;"></div>
<div class="r" style="left:659px;top:1020px;width:1px;height:60px;background:#000;"></div>
<div class="r" style="left:1418px;top:1020px;width:1px;height:60px;background:#000;"></div>
<div class="r" style="left:1465px;top:1020px;width:1px;height:60px;background:#000;"></div>
<div class="r" style="left:1514px;top:1020px;width:1px;height:60px;background:#000;"></div>
<div class="r" style="left:1562px;top:1020px;width:1px;height:60px;background:#000;"></div>
<div class="r" style="left:1610px;top:1020px;width:1px;height:60px;background:#000;"></div>
<div class="r" style="left:1658px;top:1020px;width:1px;height:60px;background:#000;"></div>
<div class="r" style="left:1706px;top:1020px;width:1px;height:60px;background:#000;"></div>
<div class="r" style="left:1810px;top:1020px;width:1px;height:60px;background:#000;"></div>
<div class="r" style="left:1869px;top:1020px;width:1px;height:60px;background:#000;"></div>
<div class="r" style="left:1882px;top:1020px;width:1px;height:60px;background:#000;"></div>
<div class="r" style="left:1919px;top:1020px;width:1px;height:60px;background:#000;"></div>
<div class="r" style="left:741px;top:1022px;width:66px;height:52px;background:#36006e;"></div>
<div class="r" style="left:808px;top:1022px;width:4px;height:52px;background:#000;"></div>
<div class="r" style="left:741px;top:1075px;width:66px;height:4px;background:#000;"></div>
<div class="r" style="left:808px;top:1075px;width:4px;height:4px;background:#000;"></div>
<div class="r" style="left:822px;top:1075px;width:59px;height:4px;background:#000;"></div>
<div class="t" style="left:132.04px;top:1042.91px;font-size:18.85px;line-height:18.85px;color:#5c0000;transform:scaleX(1.0811);">Type here to search</div>
<div class="t" style="left:1720.37px;top:1028.15px;font-size:17.32px;line-height:17.32px;color:#000;transform:scaleX(1.0114);">12:18 PM</div>
<div class="t" style="left:1720.97px;top:1055.85px;font-size:17.32px;line-height:17.32px;color:#000;transform:scaleX(1.1000);">3/8/2018</div>
<svg class="ov" width="1920" height="1080" viewBox="0 0 1920 1080"><polyline points="354,125.5 356,121.5 358,119 360,118 362,119 364,122 366,126 368,129.5 370,132.5 372,133.5 374,132.5 376,129 377.5,125.5" fill="none" stroke="#ff1010" stroke-width="1.5" stroke-dasharray="1.6 0.5" stroke-linejoin="round"/><path d="M387 135.3 L387 125.1 L390 125.1 L390 120.4 L393 120.4 L393 114.4 L396 114.4 L396 119 L399 119 L399 122.2 L402 122.2 L402 117.3 L405 117.3 L405 125.1 L408 125.1 L408 129.6 L411 129.6 L411 135.3 Z" fill="#0000ff"/><polygon points="459.06,130.21 452.41,136.86 442.99,136.86 436.34,130.21 436.34,120.79 442.99,114.14 452.41,114.14 459.06,120.79" fill="#ff0000"/><polygon points="491.86,129.01 485.21,135.66 475.79,135.66 469.14,129.01 469.14,119.59 475.79,112.94 485.21,112.94 491.86,119.59" fill="#00ee00"/><g stroke="#8a8a8a" stroke-width="1.5"><line x1="702.7" y1="113" x2="702.7" y2="135.5"/><line x1="708.9" y1="113" x2="708.9" y2="135.5"/><line x1="714.8" y1="113" x2="714.8" y2="135.5"/><line x1="720.7" y1="113" x2="720.7" y2="135.5"/><line x1="700" y1="115.2" x2="723.5" y2="115.2"/><line x1="700" y1="121.3" x2="723.5" y2="121.3"/><line x1="700" y1="127.2" x2="723.5" y2="127.2"/><line x1="700" y1="133.3" x2="723.5" y2="133.3"/></g><path d="M815 135.1 L815 121 L821.5 121 L821.5 116.2 L826.7 116.2 L826.7 126.8 L833 126.8 L833 123.9 L839 123.9 L839 135.1 Z" fill="#8a8a8a"/><path d="M918 121 L925 115 L935 115 L942.5 123.5" fill="none" stroke="#9a9a9a" stroke-width="1.4"/><path d="M925.6 122.5 L934.4 130 M934.4 122.5 L925.6 130" stroke="#9a9a9a" stroke-width="1.4"/><path d="M1121 119 Q1121 113.5 1127 113.5 Q1133.5 113.5 1133.5 119 Q1133.5 122.5 1129.5 124.5 Q1127.5 125.5 1127.5 128" fill="none" stroke="#000" stroke-width="5.2"/><path d="M1121 119 Q1121 113.5 1127 113.5 Q1133.5 113.5 1133.5 119 Q1133.5 122.5 1129.5 124.5 Q1127.5 125.5 1127.5 128" fill="none" stroke="#ffee00" stroke-width="2.6"/><circle cx="1127.5" cy="131.5" r="2.6" fill="#ffee00" stroke="#000" stroke-width="1.2"/><path d="M1149.5 112.5 L1149.5 129 L1153 125.5 L1156.5 133.5 L1159 132.5 L1155.5 124.5 L1160 124 Z" fill="#000"/><path d="M1161.5 118 Q1161.5 113.5 1166 113.5 Q1171 113.5 1171 118 Q1171 121.5 1167.5 123 Q1166 124 1166 127" fill="none" stroke="#1a1aa0" stroke-width="3"/><rect x="1163.8" y="128.5" width="4.5" height="2.6" fill="#1a1aa0"/><path d="M1689.5 41.5 L1701.5 52.5 M1701.5 41.5 L1689.5 52.5" stroke="#000" stroke-width="3"/><rect x="351.5" y="35.5" width="23" height="23" fill="#000" stroke="#777" stroke-width="1.2"/><path d="M363 36 L363 58 M352 47 L374 47" stroke="#777" stroke-width="1.2"/><polyline points="353,47 358,41.5 364,47.5 369,51.5 374,47" fill="none" stroke="#00e8ff" stroke-width="2"/><rect x="406.5" y="170" width="13" height="10.5" fill="none" stroke="#8e8e8e" stroke-width="2"/><rect x="440.5" y="170" width="13" height="10.5" fill="none" stroke="#8e8e8e" stroke-width="2"/><rect x="475.5" y="170" width="13" height="10.5" fill="none" stroke="#8e8e8e" stroke-width="2"/><rect x="509.5" y="170" width="13" height="10.5" fill="none" stroke="#8e8e8e" stroke-width="2"/><rect x="543.5" y="170" width="13" height="10.5" fill="none" stroke="#8e8e8e" stroke-width="2"/><rect x="578.5" y="170" width="13" height="10.5" fill="none" stroke="#8e8e8e" stroke-width="2"/><rect x="612.5" y="170" width="13" height="10.5" fill="none" stroke="#8e8e8e" stroke-width="2"/><rect x="647.5" y="170" width="13" height="10.5" fill="none" stroke="#8e8e8e" stroke-width="2"/><rect x="681.5" y="170" width="13" height="10.5" fill="none" stroke="#8e8e8e" stroke-width="2"/><rect x="716.5" y="170" width="13" height="10.5" fill="none" stroke="#8e8e8e" stroke-width="2"/><rect x="750.5" y="170" width="13" height="10.5" fill="none" stroke="#8e8e8e" stroke-width="2"/><rect x="785.5" y="170" width="13" height="10.5" fill="none" stroke="#8e8e8e" stroke-width="2"/><rect x="819.5" y="170" width="13" height="10.5" fill="none" stroke="#8e8e8e" stroke-width="2"/><rect x="854.5" y="170" width="13" height="10.5" fill="none" stroke="#8e8e8e" stroke-width="2"/><rect x="888.5" y="170" width="13" height="10.5" fill="none" stroke="#8e8e8e" stroke-width="2"/><rect x="922.5" y="170" width="13" height="10.5" fill="none" stroke="#8e8e8e" stroke-width="2"/><rect x="957.5" y="170" width="13" height="10.5" fill="none" stroke="#8e8e8e" stroke-width="2"/><rect x="991.5" y="170" width="13" height="10.5" fill="none" stroke="#8e8e8e" stroke-width="2"/><rect x="1026.5" y="170" width="13" height="10.5" fill="none" stroke="#8e8e8e" stroke-width="2"/><rect x="1060.5" y="170" width="13" height="10.5" fill="none" stroke="#8e8e8e" stroke-width="2"/><g stroke="#c6c6c6" stroke-width="1"><line x1="563.5" y1="196" x2="563.5" y2="878"/><line x1="677.5" y1="196" x2="677.5" y2="878"/><line x1="791.5" y1="196" x2="791.5" y2="878"/><line x1="905.5" y1="196" x2="905.5" y2="878"/><line x1="1133.5" y1="196" x2="1133.5" y2="878"/><line x1="1247.5" y1="196" x2="1247.5" y2="878"/><line x1="1361.5" y1="196" x2="1361.5" y2="878"/><line x1="1475.5" y1="196" x2="1475.5" y2="878"/><line x1="452" y1="280.5" x2="1589" y2="280.5"/><line x1="452" y1="366.5" x2="1589" y2="366.5"/><line x1="452" y1="451.5" x2="1589" y2="451.5"/><line x1="452" y1="622.5" x2="1589" y2="622.5"/><line x1="452" y1="708.5" x2="1589" y2="708.5"/><line x1="452" y1="793.5" x2="1589" y2="793.5"/></g><g stroke="#a4a4a4" stroke-width="1.3"><line x1="452" y1="537" x2="1589" y2="537" stroke-width="2"/><line x1="1019" y1="196" x2="1019" y2="878" stroke-width="1.2"/><line x1="471.8" y1="532" x2="471.8" y2="542"/><line x1="494.6" y1="532" x2="494.6" y2="542"/><line x1="517.4" y1="532" x2="517.4" y2="542"/><line x1="540.2" y1="532" x2="540.2" y2="542"/><line x1="563.0" y1="532" x2="563.0" y2="542"/><line x1="585.8" y1="532" x2="585.8" y2="542"/><line x1="608.6" y1="532" x2="608.6" y2="542"/><line x1="631.4" y1="532" x2="631.4" y2="542"/><line x1="654.2" y1="532" x2="654.2" y2="542"/><line x1="677.0" y1="532" x2="677.0" y2="542"/><line x1="699.8" y1="532" x2="699.8" y2="542"/><line x1="722.6" y1="532" x2="722.6" y2="542"/><line x1="745.4" y1="532" x2="745.4" y2="542"/><line x1="768.2" y1="532" x2="768.2" y2="542"/><line x1="791.0" y1="532" x2="791.0" y2="542"/><line x1="813.8" y1="532" x2="813.8" y2="542"/><line x1="836.6" y1="532" x2="836.6" y2="542"/><line x1="859.4" y1="532" x2="859.4" y2="542"/><line x1="882.2" y1="532" x2="882.2" y2="542"/><line x1="905.0" y1="532" x2="905.0" y2="542"/><line x1="927.8" y1="532" x2="927.8" y2="542"/><line x1="950.6" y1="532" x2="950.6" y2="542"/><line x1="973.4" y1="532" x2="973.4" y2="542"/><line x1="996.2" y1="532" x2="996.2" y2="542"/><line x1="1041.8" y1="532" x2="1041.8" y2="542"/><line x1="1064.6" y1="532" x2="1064.6" y2="542"/><line x1="1087.4" y1="532" x2="1087.4" y2="542"/><line x1="1110.2" y1="532" x2="1110.2" y2="542"/><line x1="1133.0" y1="532" x2="1133.0" y2="542"/><line x1="1155.8" y1="532" x2="1155.8" y2="542"/><line x1="1178.6" y1="532" x2="1178.6" y2="542"/><line x1="1201.4" y1="532" x2="1201.4" y2="542"/><line x1="1224.2" y1="532" x2="1224.2" y2="542"/><line x1="1247.0" y1="532" x2="1247.0" y2="542"/><line x1="1269.8" y1="532" x2="1269.8" y2="542"/><line x1="1292.6" y1="532" x2="1292.6" y2="542"/><line x1="1315.4" y1="532" x2="1315.4" y2="542"/><line x1="1338.2" y1="532" x2="1338.2" y2="542"/><line x1="1361.0" y1="532" x2="1361.0" y2="542"/><line x1="1383.8" y1="532" x2="1383.8" y2="542"/><line x1="1406.6" y1="532" x2="1406.6" y2="542"/><line x1="1429.4" y1="532" x2="1429.4" y2="542"/><line x1="1452.2" y1="532" x2="1452.2" y2="542"/><line x1="1475.0" y1="532" x2="1475.0" y2="542"/><line x1="1497.8" y1="532" x2="1497.8" y2="542"/><line x1="1520.6" y1="532" x2="1520.6" y2="542"/><line x1="1543.4" y1="532" x2="1543.4" y2="542"/><line x1="1566.2" y1="532" x2="1566.2" y2="542"/><line x1="1011.5" y1="212.1" x2="1026.5" y2="212.1"/><line x1="1011.5" y1="229.2" x2="1026.5" y2="229.2"/><line x1="1011.5" y1="246.3" x2="1026.5" y2="246.3"/><line x1="1011.5" y1="263.4" x2="1026.5" y2="263.4"/><line x1="1011.5" y1="280.5" x2="1026.5" y2="280.5"/><line x1="1011.5" y1="297.6" x2="1026.5" y2="297.6"/><line x1="1011.5" y1="314.7" x2="1026.5" y2="314.7"/><line x1="1011.5" y1="331.8" x2="1026.5" y2="331.8"/><line x1="1011.5" y1="348.9" x2="1026.5" y2="348.9"/><line x1="1011.5" y1="366.0" x2="1026.5" y2="366.0"/><line x1="1011.5" y1="383.1" x2="1026.5" y2="383.1"/><line x1="1011.5" y1="400.2" x2="1026.5" y2="400.2"/><line x1="1011.5" y1="417.3" x2="1026.5" y2="417.3"/><line x1="1011.5" y1="434.4" x2="1026.5" y2="434.4"/><line x1="1011.5" y1="451.5" x2="1026.5" y2="451.5"/><line x1="1011.5" y1="468.6" x2="1026.5" y2="468.6"/><line x1="1011.5" y1="485.7" x2="1026.5" y2="485.7"/><line x1="1011.5" y1="502.8" x2="1026.5" y2="502.8"/><line x1="1011.5" y1="519.9" x2="1026.5" y2="519.9"/><line x1="1011.5" y1="554.1" x2="1026.5" y2="554.1"/><line x1="1011.5" y1="571.2" x2="1026.5" y2="571.2"/><line x1="1011.5" y1="588.3" x2="1026.5" y2="588.3"/><line x1="1011.5" y1="605.4" x2="1026.5" y2="605.4"/><line x1="1011.5" y1="622.5" x2="1026.5" y2="622.5"/><line x1="1011.5" y1="639.6" x2="1026.5" y2="639.6"/><line x1="1011.5" y1="656.7" x2="1026.5" y2="656.7"/><line x1="1011.5" y1="673.8" x2="1026.5" y2="673.8"/><line x1="1011.5" y1="690.9" x2="1026.5" y2="690.9"/><line x1="1011.5" y1="708.0" x2="1026.5" y2="708.0"/><line x1="1011.5" y1="725.1" x2="1026.5" y2="725.1"/><line x1="1011.5" y1="742.2" x2="1026.5" y2="742.2"/><line x1="1011.5" y1="759.3" x2="1026.5" y2="759.3"/><line x1="1011.5" y1="776.4" x2="1026.5" y2="776.4"/><line x1="1011.5" y1="793.5" x2="1026.5" y2="793.5"/><line x1="1011.5" y1="810.6" x2="1026.5" y2="810.6"/><line x1="1011.5" y1="827.7" x2="1026.5" y2="827.7"/><line x1="1011.5" y1="844.8" x2="1026.5" y2="844.8"/><line x1="1011.5" y1="861.9" x2="1026.5" y2="861.9"/></g><defs><clipPath id="scl"><rect x="452" y="196" width="1137" height="682"/></clipPath></defs><polyline clip-path="url(#scl)" points="398.7,401.9 400.0,404.9 400.4,432.3 401.0,418.3 401.8,447.3 402.8,461.6 403.6,468.6 404.2,491.6 405.2,489.6 406.2,486.6 407.2,489.6 408.7,484.6 410.2,483.6 411.2,479.6 412.7,480.6 414.2,475.6 416.2,474.6 417.2,471.6 419.2,470.6 420.7,467.6 422.2,467.6 423.7,472.6 424.4,500.6 425.4,560.3 426.2,640.4 427.7,636.4 428.7,626.3 429.7,621.3 430.7,604.3 432.2,597.3 434.2,593.3 435.7,598.3 437.2,599.3 438.7,604.3 440.2,604.3 441.7,611.3 444.2,611.3 445.2,615.3 447.2,613.3 449.2,619.3 450.7,621.3 451.8,616.3 452.7,398.1 454.0,401.1 454.4,431.7 455.0,417.7 455.8,446.7 456.8,460.5 457.6,467.5 458.2,490.5 459.2,488.5 460.2,485.5 461.2,488.5 462.7,483.5 464.2,482.5 465.2,478.5 466.7,479.5 468.2,474.5 470.2,473.5 471.2,470.5 473.2,469.5 474.7,466.5 476.2,466.5 477.7,471.5 478.4,499.5 479.4,559.7 480.2,643.8 481.7,639.8 482.7,625.7 483.7,620.7 484.7,603.7 486.2,596.7 488.2,592.7 489.7,597.7 491.2,598.7 492.7,603.7 494.2,603.7 495.7,610.7 498.2,610.7 499.2,614.7 501.2,612.7 503.2,618.7 504.7,620.7 505.8,615.7 506.7,397.9 508.0,400.9 508.4,431.1 509.0,417.1 509.8,446.1 510.8,459.1 511.6,466.1 512.2,489.1 513.2,487.1 514.2,484.1 515.2,487.1 516.7,482.1 518.2,481.1 519.2,477.1 520.7,478.1 522.2,473.1 524.2,472.1 525.2,469.1 527.2,468.1 528.7,465.1 530.2,465.1 531.7,470.1 532.4,498.1 533.4,559.1 534.2,643.6 535.7,639.6 536.7,625.1 537.7,620.1 538.7,603.1 540.2,596.1 542.2,592.1 543.7,597.1 545.2,598.1 546.7,603.1 548.2,603.1 549.7,610.1 552.2,610.1 553.2,614.1 555.2,612.1 557.2,618.1 558.7,620.1 559.8,615.1 560.6,403.5 561.9,406.5 562.3,431.2 562.9,417.2 563.7,446.2 564.7,459.4 565.5,466.4 566.1,489.4 567.1,487.4 568.1,484.4 569.1,487.4 570.6,482.4 572.1,481.4 573.1,477.4 574.6,478.4 576.1,473.4 578.1,472.4 579.1,469.4 581.1,468.4 582.6,465.4 584.1,465.4 585.6,470.4 586.3,498.4 587.3,559.2 588.1,639.6 589.6,635.6 590.6,625.2 591.6,620.2 592.6,603.2 594.1,596.2 596.1,592.2 597.6,597.2 599.1,598.2 600.6,603.2 602.1,603.2 603.6,610.2 606.1,610.2 607.1,614.2 609.1,612.2 611.1,618.2 612.6,620.2 613.7,615.2 614.6,403.4 615.9,406.4 616.3,431.2 616.9,417.2 617.7,446.2 618.7,459.5 619.5,466.5 620.1,489.5 621.1,487.5 622.1,484.5 623.1,487.5 624.6,482.5 626.1,481.5 627.1,477.5 628.6,478.5 630.1,473.5 632.1,472.5 633.1,469.5 635.1,468.5 636.6,465.5 638.1,465.5 639.6,470.5 640.3,498.5 641.3,559.2 642.1,646.4 643.6,642.4 644.6,625.2 645.6,620.2 646.6,603.2 648.1,596.2 650.1,592.2 651.6,597.2 653.1,598.2 654.6,603.2 656.1,603.2 657.6,610.2 660.1,610.2 661.1,614.2 663.1,612.2 665.1,618.2 666.6,620.2 667.7,615.2 668.5,400.3 669.8,403.3 670.2,432.9 670.8,418.9 671.6,447.9 672.6,462.8 673.4,469.8 674.0,492.8 675.0,490.8 676.0,487.8 677.0,490.8 678.5,485.8 680.0,484.8 681.0,480.8 682.5,481.8 684.0,476.8 686.0,475.8 687.0,472.8 689.0,471.8 690.5,468.8 692.0,468.8 693.5,473.8 694.2,501.8 695.2,560.9 696.0,644.6 697.5,640.6 698.5,626.9 699.5,621.9 700.5,604.9 702.0,597.9 704.0,593.9 705.5,598.9 707.0,599.9 708.5,604.9 710.0,604.9 711.5,611.9 714.0,611.9 715.0,615.9 717.0,613.9 719.0,619.9 720.5,621.9 721.6,616.9 722.5,405.7 723.8,408.7 724.2,433.0 724.8,419.0 725.6,448.0 726.6,462.9 727.4,469.9 728.0,492.9 729.0,490.9 730.0,487.9 731.0,490.9 732.5,485.9 734.0,484.9 735.0,480.9 736.5,481.9 738.0,476.9 740.0,475.9 741.0,472.9 743.0,471.9 744.5,468.9 746.0,468.9 747.5,473.9 748.2,501.9 749.2,561.0 750.0,642.6 751.5,638.6 752.5,627.0 753.5,622.0 754.5,605.0 756.0,598.0 758.0,594.0 759.5,599.0 761.0,600.0 762.5,605.0 764.0,605.0 765.5,612.0 768.0,612.0 769.0,616.0 771.0,614.0 773.0,620.0 774.5,622.0 775.6,617.0 776.5,397.7 777.8,400.7 778.2,431.6 778.8,417.6 779.6,446.6 780.6,460.2 781.4,467.2 782.0,490.2 783.0,488.2 784.0,485.2 785.0,488.2 786.5,483.2 788.0,482.2 789.0,478.2 790.5,479.2 792.0,474.2 794.0,473.2 795.0,470.2 797.0,469.2 798.5,466.2 800.0,466.2 801.5,471.2 802.2,499.2 803.2,559.6 804.0,646.7 805.5,642.7 806.5,625.6 807.5,620.6 808.5,603.6 810.0,596.6 812.0,592.6 813.5,597.6 815.0,598.6 816.5,603.6 818.0,603.6 819.5,610.6 822.0,610.6 823.0,614.6 825.0,612.6 827.0,618.6 828.5,620.6 829.6,615.6 830.4,399.2 831.7,402.2 832.1,431.6 832.7,417.6 833.5,446.6 834.5,460.2 835.3,467.2 835.9,490.2 836.9,488.2 837.9,485.2 838.9,488.2 840.4,483.2 841.9,482.2 842.9,478.2 844.4,479.2 845.9,474.2 847.9,473.2 848.9,470.2 850.9,469.2 852.4,466.2 853.9,466.2 855.4,471.2 856.1,499.2 857.1,559.6 857.9,640.1 859.4,636.1 860.4,625.6 861.4,620.6 862.4,603.6 863.9,596.6 865.9,592.6 867.4,597.6 868.9,598.6 870.4,603.6 871.9,603.6 873.4,610.6 875.9,610.6 876.9,614.6 878.9,612.6 880.9,618.6 882.4,620.6 883.5,615.6 884.4,409.2 885.7,412.2 886.1,432.2 886.7,418.2 887.5,447.2 888.5,461.3 889.3,468.3 889.9,491.3 890.9,489.3 891.9,486.3 892.9,489.3 894.4,484.3 895.9,483.3 896.9,479.3 898.4,480.3 899.9,475.3 901.9,474.3 902.9,471.3 904.9,470.3 906.4,467.3 907.9,467.3 909.4,472.3 910.1,500.3 911.1,560.2 911.9,640.6 913.4,636.6 914.4,626.2 915.4,621.2 916.4,604.2 917.9,597.2 919.9,593.2 921.4,598.2 922.9,599.2 924.4,604.2 925.9,604.2 927.4,611.2 929.9,611.2 930.9,615.2 932.9,613.2 934.9,619.2 936.4,621.2 937.5,616.2 938.3,406.6 939.6,409.6 940.0,432.1 940.6,418.1 941.4,447.1 942.4,461.2 943.2,468.2 943.8,491.2 944.8,489.2 945.8,486.2 946.8,489.2 948.3,484.2 949.8,483.2 950.8,479.2 952.3,480.2 953.8,475.2 955.8,474.2 956.8,471.2 958.8,470.2 960.3,467.2 961.8,467.2 963.3,472.2 964.0,500.2 965.0,560.1 965.8,642.4 967.3,638.4 968.3,626.1 969.3,621.1 970.3,604.1 971.8,597.1 973.8,593.1 975.3,598.1 976.8,599.1 978.3,604.1 979.8,604.1 981.3,611.1 983.8,611.1 984.8,615.1 986.8,613.1 988.8,619.1 990.3,621.1 991.4,616.1 992.3,397.9 993.6,400.9 994.0,431.4 994.6,417.4 995.4,446.4 996.4,459.8 997.2,466.8 997.8,489.8 998.8,487.8 999.8,484.8 1000.8,487.8 1002.3,482.8 1003.8,481.8 1004.8,477.8 1006.3,478.8 1007.8,473.8 1009.8,472.8 1010.8,469.8 1012.8,468.8 1014.3,465.8 1015.8,465.8 1017.3,470.8 1018.0,498.8 1019.0,559.4 1019.8,639.5 1021.3,635.5 1022.3,625.4 1023.3,620.4 1024.3,603.4 1025.8,596.4 1027.8,592.4 1029.3,597.4 1030.8,598.4 1032.3,603.4 1033.8,603.4 1035.3,610.4 1037.8,610.4 1038.8,614.4 1040.8,612.4 1042.8,618.4 1044.3,620.4 1045.4,615.4 1046.3,407.2 1047.6,410.2 1048.0,431.6 1048.6,417.6 1049.4,446.6 1050.4,460.3 1051.2,467.3 1051.8,490.3 1052.8,488.3 1053.8,485.3 1054.8,488.3 1056.3,483.3 1057.8,482.3 1058.8,478.3 1060.3,479.3 1061.8,474.3 1063.8,473.3 1064.8,470.3 1066.8,469.3 1068.3,466.3 1069.8,466.3 1071.3,471.3 1072.0,499.3 1073.0,559.6 1073.8,642.8 1075.3,638.8 1076.3,625.6 1077.3,620.6 1078.3,603.6 1079.8,596.6 1081.8,592.6 1083.3,597.6 1084.8,598.6 1086.3,603.6 1087.8,603.6 1089.3,610.6 1091.8,610.6 1092.8,614.6 1094.8,612.6 1096.8,618.6 1098.3,620.6 1099.4,615.6 1100.2,405.8 1101.5,408.8 1101.9,431.6 1102.5,417.6 1103.3,446.6 1104.3,460.2 1105.1,467.2 1105.7,490.2 1106.7,488.2 1107.7,485.2 1108.7,488.2 1110.2,483.2 1111.7,482.2 1112.7,478.2 1114.2,479.2 1115.7,474.2 1117.7,473.2 1118.7,470.2 1120.7,469.2 1122.2,466.2 1123.7,466.2 1125.2,471.2 1125.9,499.2 1126.9,559.6 1127.7,643.1 1129.2,639.1 1130.2,625.6 1131.2,620.6 1132.2,603.6 1133.7,596.6 1135.7,592.6 1137.2,597.6 1138.7,598.6 1140.2,603.6 1141.7,603.6 1143.2,610.6 1145.7,610.6 1146.7,614.6 1148.7,612.6 1150.7,618.6 1152.2,620.6 1153.3,615.6 1154.2,408.9 1155.5,411.9 1155.9,431.5 1156.5,417.5 1157.3,446.5 1158.3,460.0 1159.1,467.0 1159.7,490.0 1160.7,488.0 1161.7,485.0 1162.7,488.0 1164.2,483.0 1165.7,482.0 1166.7,478.0 1168.2,479.0 1169.7,474.0 1171.7,473.0 1172.7,470.0 1174.7,469.0 1176.2,466.0 1177.7,466.0 1179.2,471.0 1179.9,499.0 1180.9,559.5 1181.7,645.3 1183.2,641.3 1184.2,625.5 1185.2,620.5 1186.2,603.5 1187.7,596.5 1189.7,592.5 1191.2,597.5 1192.7,598.5 1194.2,603.5 1195.7,603.5 1197.2,610.5 1199.7,610.5 1200.7,614.5 1202.7,612.5 1204.7,618.5 1206.2,620.5 1207.3,615.5 1208.1,405.6 1209.4,408.6 1209.8,432.8 1210.4,418.8 1211.2,447.8 1212.2,462.5 1213.0,469.5 1213.6,492.5 1214.6,490.5 1215.6,487.5 1216.6,490.5 1218.1,485.5 1219.6,484.5 1220.6,480.5 1222.1,481.5 1223.6,476.5 1225.6,475.5 1226.6,472.5 1228.6,471.5 1230.1,468.5 1231.6,468.5 1233.1,473.5 1233.8,501.5 1234.8,560.8 1235.6,643.7 1237.1,639.7 1238.1,626.8 1239.1,621.8 1240.1,604.8 1241.6,597.8 1243.6,593.8 1245.1,598.8 1246.6,599.8 1248.1,604.8 1249.6,604.8 1251.1,611.8 1253.6,611.8 1254.6,615.8 1256.6,613.8 1258.6,619.8 1260.1,621.8 1261.2,616.8 1262.1,407.9 1263.4,410.9 1263.8,433.0 1264.4,419.0 1265.2,448.0 1266.2,462.9 1267.0,469.9 1267.6,492.9 1268.6,490.9 1269.6,487.9 1270.6,490.9 1272.1,485.9 1273.6,484.9 1274.6,480.9 1276.1,481.9 1277.6,476.9 1279.6,475.9 1280.6,472.9 1282.6,471.9 1284.1,468.9 1285.6,468.9 1287.1,473.9 1287.8,501.9 1288.8,561.0 1289.6,641.6 1291.1,637.6 1292.1,627.0 1293.1,622.0 1294.1,605.0 1295.6,598.0 1297.6,594.0 1299.1,599.0 1300.6,600.0 1302.1,605.0 1303.6,605.0 1305.1,612.0 1307.6,612.0 1308.6,616.0 1310.6,614.0 1312.6,620.0 1314.1,622.0 1315.2,617.0 1316.1,398.8 1317.4,401.8 1317.8,432.5 1318.4,418.5 1319.2,447.5 1320.2,462.0 1321.0,469.0 1321.6,492.0 1322.6,490.0 1323.6,487.0 1324.6,490.0 1326.1,485.0 1327.6,484.0 1328.6,480.0 1330.1,481.0 1331.6,476.0 1333.6,475.0 1334.6,472.0 1336.6,471.0 1338.1,468.0 1339.6,468.0 1341.1,473.0 1341.8,501.0 1342.8,560.5 1343.6,642.8 1345.1,638.8 1346.1,626.5 1347.1,621.5 1348.1,604.5 1349.6,597.5 1351.6,593.5 1353.1,598.5 1354.6,599.5 1356.1,604.5 1357.6,604.5 1359.1,611.5 1361.6,611.5 1362.6,615.5 1364.6,613.5 1366.6,619.5 1368.1,621.5 1369.2,616.5 1370.0,399.3 1371.3,402.3 1371.7,431.1 1372.3,417.1 1373.1,446.1 1374.1,459.2 1374.9,466.2 1375.5,489.2 1376.5,487.2 1377.5,484.2 1378.5,487.2 1380.0,482.2 1381.5,481.2 1382.5,477.2 1384.0,478.2 1385.5,473.2 1387.5,472.2 1388.5,469.2 1390.5,468.2 1392.0,465.2 1393.5,465.2 1395.0,470.2 1395.7,498.2 1396.7,559.1 1397.5,643.4 1399.0,639.4 1400.0,625.1 1401.0,620.1 1402.0,603.1 1403.5,596.1 1405.5,592.1 1407.0,597.1 1408.5,598.1 1410.0,603.1 1411.5,603.1 1413.0,610.1 1415.5,610.1 1416.5,614.1 1418.5,612.1 1420.5,618.1 1422.0,620.1 1423.1,615.1 1424.0,407.0 1425.3,410.0 1425.7,432.1 1426.3,418.1 1427.1,447.1 1428.1,461.3 1428.9,468.3 1429.5,491.3 1430.5,489.3 1431.5,486.3 1432.5,489.3 1434.0,484.3 1435.5,483.3 1436.5,479.3 1438.0,480.3 1439.5,475.3 1441.5,474.3 1442.5,471.3 1444.5,470.3 1446.0,467.3 1447.5,467.3 1449.0,472.3 1449.7,500.3 1450.7,560.1 1451.5,645.9 1453.0,641.9 1454.0,626.1 1455.0,621.1 1456.0,604.1 1457.5,597.1 1459.5,593.1 1461.0,598.1 1462.5,599.1 1464.0,604.1 1465.5,604.1 1467.0,611.1 1469.5,611.1 1470.5,615.1 1472.5,613.1 1474.5,619.1 1476.0,621.1 1477.1,616.1 1477.9,410.1 1479.2,413.1 1479.6,432.4 1480.2,418.4 1481.0,447.4 1482.0,461.8 1482.8,468.8 1483.4,491.8 1484.4,489.8 1485.4,486.8 1486.4,489.8 1487.9,484.8 1489.4,483.8 1490.4,479.8 1491.9,480.8 1493.4,475.8 1495.4,474.8 1496.4,471.8 1498.4,470.8 1499.9,467.8 1501.4,467.8 1502.9,472.8 1503.6,500.8 1504.6,560.4 1505.4,641.8 1506.9,637.8 1507.9,626.4 1508.9,621.4 1509.9,604.4 1511.4,597.4 1513.4,593.4 1514.9,598.4 1516.4,599.4 1517.9,604.4 1519.4,604.4 1520.9,611.4 1523.4,611.4 1524.4,615.4 1526.4,613.4 1528.4,619.4 1529.9,621.4 1531.0,616.4 1531.9,405.9 1533.2,408.9 1533.6,431.9 1534.2,417.9 1535.0,446.9 1536.0,460.8 1536.8,467.8 1537.4,490.8 1538.4,488.8 1539.4,485.8 1540.4,488.8 1541.9,483.8 1543.4,482.8 1544.4,478.8 1545.9,479.8 1547.4,474.8 1549.4,473.8 1550.4,470.8 1552.4,469.8 1553.9,466.8 1555.4,466.8 1556.9,471.8 1557.6,499.8 1558.6,559.9 1559.4,644.2 1560.9,640.2 1561.9,625.9 1562.9,620.9 1563.9,603.9 1565.4,596.9 1567.4,592.9 1568.9,597.9 1570.4,598.9 1571.9,603.9 1573.4,603.9 1574.9,610.9 1577.4,610.9 1578.4,614.9 1580.4,612.9 1582.4,618.9 1583.9,620.9 1585.0,615.9 1585.9,409.6 1587.2,412.6 1587.6,431.9 1588.2,417.9 1589.0,446.9 1590.0,460.9 1590.8,467.9 1591.4,490.9 1592.4,488.9 1593.4,485.9 1594.4,488.9 1595.9,483.9 1597.4,482.9 1598.4,478.9 1599.9,479.9 1601.4,474.9 1603.4,473.9 1604.4,470.9 1606.4,469.9 1607.9,466.9 1609.4,466.9 1610.9,471.9 1611.6,499.9 1612.6,559.9 1613.4,647.5 1614.9,643.5 1615.9,625.9 1616.9,620.9 1617.9,603.9 1619.4,596.9 1621.4,592.9 1622.9,597.9 1624.4,598.9 1625.9,603.9 1627.4,603.9 1628.9,610.9 1631.4,610.9 1632.4,614.9 1634.4,612.9 1636.4,618.9 1637.9,620.9 1639.0,615.9 1639.8,407.0 1641.1,410.0 1641.5,432.4 1642.1,418.4 1642.9,447.4 1643.9,461.8 1644.7,468.8 1645.3,491.8 1646.3,489.8 1647.3,486.8 1648.3,489.8 1649.8,484.8 1651.3,483.8 1652.3,479.8 1653.8,480.8 1655.3,475.8 1657.3,474.8 1658.3,471.8 1660.3,470.8 1661.8,467.8 1663.3,467.8 1664.8,472.8 1665.5,500.8 1666.5,560.4 1667.3,639.5 1668.8,635.5 1669.8,626.4 1670.8,621.4 1671.8,604.4 1673.3,597.4 1675.3,593.4 1676.8,598.4 1678.3,599.4 1679.8,604.4 1681.3,604.4 1682.8,611.4 1685.3,611.4 1686.3,615.4 1688.3,613.4 1690.3,619.4 1691.8,621.4 1692.9,616.4" fill="none" stroke="#3b3bbd" stroke-width="3" stroke-linejoin="miter" stroke-miterlimit="2" shape-rendering="crispEdges"/><circle cx="1623.1" cy="569.4" r="6.8" fill="#fff" stroke="#c4c4c4" stroke-width="2"/><path d="M1617.5 572.5 A6.5 6.5 0 0 1 1627 563.5" fill="none" stroke="#111" stroke-width="1.8"/><circle cx="1623.1" cy="569.4" r="2.4" fill="#000"/><circle cx="1682.1" cy="569.4" r="6.8" fill="#fff" stroke="#c4c4c4" stroke-width="2"/><path d="M1676.5 572.5 A6.5 6.5 0 0 1 1686 563.5" fill="none" stroke="#111" stroke-width="1.8"/><rect x="1616" y="610" width="94" height="4" fill="#c0c0c0"/><rect x="1616" y="610" width="93" height="2" fill="#333"/><path d="M1658.5 604.5 L1667.5 604.5 L1667.5 619 L1663 624 L1658.5 619 Z" fill="#fff" stroke="#c0c0c0" stroke-width="1.5"/><path d="M1667.5 604 L1667.5 619 L1663 624" fill="none" stroke="#111" stroke-width="1.6"/><line x1="1621" y1="626.3" x2="1621" y2="630.7" stroke="#000" stroke-width="1.2"/><line x1="1663" y1="626.3" x2="1663" y2="630.7" stroke="#000" stroke-width="1.2"/><line x1="1705.4" y1="626.3" x2="1705.4" y2="630.7" stroke="#000" stroke-width="1.2"/><path d="M1629 667 L1633 671.5 L1640 662.5" fill="none" stroke="#000" stroke-width="2.4"/><path d="M1711 911 L1728 894 M1716 911 L1728 899 M1721 911 L1728 904" stroke="#9a9a9a" stroke-width="1.6"/><path d="M419.5 304.2 L423.8 299.7 L428 304.2 Z" fill="#000"/><path d="M419.5 386.8 L423.8 382.3 L428 386.8 Z" fill="#000"/><path d="M419.5 317.9 L423.8 322.4 L428 317.9 Z" fill="#000"/><path d="M419.5 400.5 L423.8 405 L428 400.5 Z" fill="#000"/><path d="M23.8 1040 L33.5 1038.7 L33.5 1049.2 L23.8 1049.2 Z M35 1038.5 L48 1036.8 L48 1049.2 L35 1049.2 Z M23.8 1050.6 L33.5 1050.6 L33.5 1061 L23.8 1059.8 Z M35 1050.6 L48 1050.6 L48 1062 L35 1060.8 Z" fill="#000"/><circle cx="101.9" cy="1049.75" r="14.6" fill="none" stroke="#000" stroke-width="4.2"/><circle cx="101.9" cy="1049.75" r="16.6" fill="none" stroke="#888" stroke-width="1"/><rect x="553.5" y="1038.5" width="8.5" height="16" rx="1.5" fill="none" stroke="#000" stroke-width="1.8"/><path d="M549.5 1050 L549.5 1052 Q549.5 1058 557.7 1058 Q566 1058 566 1052 L566 1050 M557.7 1058 L557.7 1061 M553 1061.5 L562.5 1061.5" fill="none" stroke="#000" stroke-width="1.8"/><rect x="615.5" y="1040.5" width="17.5" height="19" fill="none" stroke="#000" stroke-width="1.6"/><path d="M612.5 1043.5 L609.5 1043.5 L609.5 1056.5 L612.5 1056.5 M636 1043.5 L639 1043.5 L639 1056.5 L636 1056.5" fill="none" stroke="#000" stroke-width="1.6"/><path d="M700.9 1049.75 L686.26 1041.30 A16.9 16.9 0 0 1 715.54 1041.30 Z" fill="#db4437"/><path d="M700.9 1049.75 L715.54 1041.30 A16.9 16.9 0 0 1 700.90 1066.65 Z" fill="#fcc934"/><path d="M700.9 1049.75 L700.90 1066.65 A16.9 16.9 0 0 1 686.26 1041.30 Z" fill="#1e9e57"/><circle cx="700.9" cy="1049.75" r="7.8" fill="#fff"/><circle cx="700.9" cy="1049.75" r="6.2" fill="#4f86ec"/><rect x="758.5" y="1032" width="35.5" height="35.5" fill="#000" stroke="#c8c8c8" stroke-width="1.6"/><g stroke="#8a8a8a" stroke-width="1.2"><line x1="767.5" y1="1032" x2="767.5" y2="1068"/><line x1="776.5" y1="1032" x2="776.5" y2="1068"/><line x1="785.5" y1="1032" x2="785.5" y2="1068"/><line x1="758" y1="1041.5" x2="794" y2="1041.5"/><line x1="758" y1="1050.5" x2="794" y2="1050.5"/><line x1="758" y1="1059.5" x2="794" y2="1059.5"/></g><polyline points="759.0,1050.0 760.0,1048.1 761.0,1046.2 762.0,1044.5 763.0,1042.9 764.0,1041.6 765.0,1040.6 766.0,1039.9 767.0,1039.5 768.0,1039.5 769.0,1039.9 770.0,1040.6 771.0,1041.6 772.0,1042.9 773.0,1044.5 774.0,1046.2 775.0,1048.1 776.0,1050.0 777.0,1051.9 778.0,1053.8 779.0,1055.5 780.0,1057.1 781.0,1058.4 782.0,1059.4 783.0,1060.1 784.0,1060.5 785.0,1060.5 786.0,1060.1 787.0,1059.4 788.0,1058.4 789.0,1057.1 790.0,1055.5 791.0,1053.8 792.0,1051.9 793.0,1050.0" fill="none" stroke="#00e0f0" stroke-width="1.4"/><path d="M835 1037 L846 1037 L849 1039.5 L867 1039.5 Q867.5 1039.5 867.5 1040.5 L867.5 1062 Q867.5 1063 866.5 1063 L836 1063 Q835 1063 835 1062 Z" fill="#f9df8a"/><path d="M835 1037 L846 1037 L849 1039.5 L849 1041 L835 1041 Z" fill="#f3c64b"/><path d="M840 1063 L840 1050 L862 1050 L862 1063 L857 1063 L857 1055 L845 1055 L845 1063 Z" fill="#3aaee8"/><path d="M914 1043 L937 1043 L937 1058.5 Q937 1060.8 934.7 1060.8 L916.3 1060.8 Q914 1060.8 914 1058.5 Z" fill="#000"/><path d="M920 1043 L920 1041 Q920 1037.8 925.5 1037.8 Q931 1037.8 931 1041 L931 1043" fill="none" stroke="#000" stroke-width="1.6"/><g fill="#fff"><rect x="920.5" y="1047.5" width="4.3" height="4.3"/><rect x="926.3" y="1047.5" width="4.3" height="4.3"/><rect x="920.5" y="1053.3" width="4.3" height="4.3"/><rect x="926.3" y="1053.3" width="4.3" height="4.3"/></g><path d="M989 1044 L1001 1038.8 L1013 1044 L1013 1058 L989 1058 Z" fill="#000"/><path d="M989.5 1044.5 L1012.5 1044.5 L1004 1049 L1007.5 1053.5 L1001 1050 Z" fill="#fff"/><g fill="none" stroke="#000" stroke-width="1.6"><circle cx="1386.5" cy="1043" r="3.8"/><path d="M1379.5 1052.5 Q1381 1047.5 1386.5 1047.5 Q1392 1047.5 1392.5 1051"/><circle cx="1377.5" cy="1050" r="3.8"/><path d="M1371.5 1060.3 Q1372.5 1054.5 1377.5 1054.5 Q1382.5 1054.5 1383.5 1060.3"/></g><path d="M1433.5 1054 L1442 1045.5 L1450.5 1054" fill="none" stroke="#000" stroke-width="1.6"/><g fill="none" stroke="#8a8a8a" stroke-width="1.2"><path d="M1478.5 1045 L1484.5 1041 L1490 1045 L1484.5 1049 Z"/><path d="M1490 1045 L1495.5 1041 L1501.5 1045 L1495.5 1049 Z"/><path d="M1478.5 1053 L1484.5 1049 L1490 1053 L1484.5 1057 Z"/><path d="M1490 1053 L1495.5 1049 L1501.5 1053 L1495.5 1057 Z"/><path d="M1484.5 1056.5 L1490 1053 L1495.5 1056.5 L1490 1060 Z"/></g><path d="M1527 1054 Q1525 1049 1530 1048 Q1532 1042 1538 1043 Q1543 1041 1545 1046 Q1550 1046 1550 1051 Q1550 1056 1545 1056 L1530 1056 Q1527 1056 1527 1054 Z" fill="none" stroke="#9a9a9a" stroke-width="1.2"/><rect x="1579" y="1044.5" width="17.5" height="12" fill="#000" stroke="#000" stroke-width="1.2"/><rect x="1596.5" y="1048" width="2" height="5" fill="#000"/><path d="M1574 1041 L1574 1045 M1577.5 1041 L1577.5 1045 M1573 1045 L1578.5 1045 L1578.5 1048 Q1578.5 1051 1575.7 1051 Q1573 1051 1573 1048 Z M1575.7 1051 L1575.7 1057" fill="none" stroke="#000" stroke-width="1.2"/><g fill="none" stroke="#000" stroke-width="1.4"><path d="M1626.5 1060 A17.5 17.5 0 0 1 1644 1042.5"/><path d="M1631 1060 A13 13 0 0 1 1644 1047"/><path d="M1635.5 1060 A8.5 8.5 0 0 1 1644 1051.5"/></g><circle cx="1642.5" cy="1058.5" r="1.4" fill="#000"/><path d="M1671 1046 L1675 1046 L1680 1041.5 L1680 1058.5 L1675 1054 L1671 1054 Z" fill="none" stroke="#000" stroke-width="1.4"/><g fill="none" stroke="#000" stroke-width="1.4"><path d="M1683.5 1047.5 Q1685.5 1050 1683.5 1052.5"/><path d="M1686.5 1044.5 Q1690.5 1050 1686.5 1055.5"/><path d="M1689.5 1041.5 Q1695.5 1050 1689.5 1058.5"/></g><path d="M1828 1038 L1852 1038 L1852 1056 L1838 1056 L1835 1061 L1835 1056 L1828 1056 Z" fill="#000"/><g stroke="#fff" stroke-width="1"><line x1="1833" y1="1043.5" x2="1847" y2="1043.5"/><line x1="1833" y1="1047" x2="1847" y2="1047"/><line x1="1833" y1="1050.5" x2="1844" y2="1050.5"/></g><circle cx="1851.5" cy="1061.4" r="10.8" fill="#fff" stroke="#000" stroke-width="1.2"/></svg>
<div class="t" style="left:525.09px;top:114.13px;font-size:11.45px;line-height:11.45px;color:#0000a8;transform:scaleX(1.2377);">L</div>
<div class="t" style="left:521.55px;top:126.63px;font-size:11.45px;line-height:11.45px;color:#000;transform:scaleX(1.3740);">IN</div>
<div class="t" style="left:557.80px;top:114.13px;font-size:11.45px;line-height:11.45px;color:#b00000;transform:scaleX(1.0074);">R</div>
<div class="t" style="left:554.58px;top:126.63px;font-size:11.45px;line-height:11.45px;color:#000;transform:scaleX(1.3475);">IN</div>
<div class="t" style="left:584.79px;top:114.13px;font-size:11.45px;line-height:11.45px;color:#0000a8;transform:scaleX(1.2872);">L</div>
<div class="t" style="left:600.10px;top:114.13px;font-size:11.45px;line-height:11.45px;color:#b00000;transform:scaleX(0.9559);">R</div>
<div class="t" style="left:589.21px;top:126.63px;font-size:11.45px;line-height:11.45px;color:#000;transform:scaleX(1.3105);">IN</div>
<div class="t" style="left:619.41px;top:114.13px;font-size:11.45px;line-height:11.45px;color:#0000a8;transform:scaleX(1.2674);">L</div>
<div class="t" style="left:626.91px;top:115.54px;font-size:9.78px;line-height:9.78px;color:#000;transform:scaleX(1.4278);font-weight:bold;">+</div>
<div class="t" style="left:634.53px;top:114.13px;font-size:11.45px;line-height:11.45px;color:#b00000;transform:scaleX(1.0294);">R</div>
<div class="t" style="left:623.55px;top:126.63px;font-size:11.45px;line-height:11.45px;color:#000;transform:scaleX(1.3740);">IN</div>
<div class="t" style="left:653.79px;top:114.13px;font-size:11.45px;line-height:11.45px;color:#0000a8;transform:scaleX(1.2872);">L</div>
<div class="r" style="left:662px;top:119px;width:7px;height:1.6px;background:#000"></div>
<div class="t" style="left:669.05px;top:114.13px;font-size:11.45px;line-height:11.45px;color:#b00000;transform:scaleX(1.0147);">R</div>
<div class="t" style="left:657.94px;top:126.63px;font-size:11.45px;line-height:11.45px;color:#000;transform:scaleX(1.3845);">IN</div>
<div class="t" style="left:437.28px;top:119.94px;font-size:12.57px;line-height:12.57px;color:#d8d8d8;transform:scaleX(0.6132);font-weight:bold;">STOP</div>
<div class="t" style="left:473.08px;top:118.35px;font-size:13.27px;line-height:13.27px;color:#000;transform:scaleX(0.7677);font-weight:bold;">GO</div>
<div class="t" style="left:747.21px;top:118.97px;font-size:13.13px;line-height:13.13px;color:#8c8c8c;transform:scaleX(0.9049);font-weight:bold;">REL</div>
<div class="t" style="left:779.38px;top:115.23px;font-size:8.66px;line-height:8.66px;color:#8c8c8c;transform:scaleX(1.0684);font-weight:bold;">PEAK</div>
<div class="t" style="left:779.39px;top:124.63px;font-size:8.66px;line-height:8.66px;color:#8c8c8c;transform:scaleX(1.0598);font-weight:bold;">HOLD</div>
<div class="t" style="left:849.74px;top:113.70px;font-size:10.47px;line-height:10.47px;color:#8c8c8c;transform:scaleX(1.2299);font-weight:bold;">MIC</div>
<div class="t" style="left:850.14px;top:125.60px;font-size:10.47px;line-height:10.47px;color:#8c8c8c;transform:scaleX(1.0782);font-weight:bold;">CAL</div>
<div class="t" style="left:885.93px;top:118.97px;font-size:13.13px;line-height:13.13px;color:#8c8c8c;transform:scaleX(0.8586);font-weight:bold;">SPL</div>
<div class="t" style="left:966.66px;top:116.39px;font-size:15.36px;line-height:15.36px;color:#000;transform:scaleX(0.9200);">mV</div>
<div class="t" style="left:1002.82px;top:115.81px;font-size:16.06px;line-height:16.06px;color:#000;transform:scaleX(0.8607);">dB</div>
<div class="t" style="left:1039.26px;top:113.77px;font-size:9.92px;line-height:9.92px;color:#000;transform:scaleX(1.0635);">CF</div>
<div class="t" style="left:1035.24px;top:123.98px;font-size:11.45px;line-height:11.45px;color:#000;transform:scaleX(1.1711);">V/V</div>
<div class="t" style="left:1073.76px;top:113.77px;font-size:9.92px;line-height:9.92px;color:#000;transform:scaleX(1.0635);">CF</div>
<div class="t" style="left:1073.80px;top:123.98px;font-size:11.45px;line-height:11.45px;color:#000;transform:scaleX(1.0446);">dB</div>
<div class="t" style="left:351.20px;top:156.95px;font-size:11.73px;line-height:11.73px;color:#8c8c8c;transform:scaleX(1.0397);">Mem</div>
<div class="t" style="left:358.33px;top:168.84px;font-size:12.57px;line-height:12.57px;color:#8c8c8c;transform:scaleX(1.2239);">W</div>
<div class="t" style="left:398.21px;top:156.95px;font-size:11.73px;line-height:11.73px;color:#8c8c8c;transform:scaleX(1.0274);">Mem</div>
<div class="t" style="left:407.12px;top:169.61px;font-size:11.17px;line-height:11.17px;color:#8c8c8c;transform:scaleX(1.2502);font-weight:bold;">1</div>
<div class="t" style="left:432.21px;top:156.95px;font-size:11.73px;line-height:11.73px;color:#8c8c8c;transform:scaleX(1.0274);">Mem</div>
<div class="t" style="left:441.53px;top:169.61px;font-size:11.17px;line-height:11.17px;color:#8c8c8c;transform:scaleX(1.2083);font-weight:bold;">2</div>
<div class="t" style="left:467.21px;top:156.95px;font-size:11.73px;line-height:11.73px;color:#8c8c8c;transform:scaleX(1.0274);">Mem</div>
<div class="t" style="left:476.70px;top:169.61px;font-size:11.17px;line-height:11.17px;color:#8c8c8c;transform:scaleX(1.1704);font-weight:bold;">3</div>
<div class="t" style="left:501.21px;top:156.95px;font-size:11.73px;line-height:11.73px;color:#8c8c8c;transform:scaleX(1.0274);">Mem</div>
<div class="t" style="left:510.82px;top:169.61px;font-size:11.17px;line-height:11.17px;color:#8c8c8c;transform:scaleX(1.0861);font-weight:bold;">4</div>
<div class="t" style="left:535.21px;top:156.95px;font-size:11.73px;line-height:11.73px;color:#8c8c8c;transform:scaleX(1.0274);">Mem</div>
<div class="t" style="left:544.60px;top:169.61px;font-size:11.17px;line-height:11.17px;color:#8c8c8c;transform:scaleX(1.1692);font-weight:bold;">5</div>
<div class="t" style="left:570.21px;top:156.95px;font-size:11.73px;line-height:11.73px;color:#8c8c8c;transform:scaleX(1.0274);">Mem</div>
<div class="t" style="left:579.51px;top:169.61px;font-size:11.17px;line-height:11.17px;color:#8c8c8c;transform:scaleX(1.2035);font-weight:bold;">6</div>
<div class="t" style="left:604.21px;top:156.95px;font-size:11.73px;line-height:11.73px;color:#8c8c8c;transform:scaleX(1.0274);">Mem</div>
<div class="t" style="left:613.40px;top:169.61px;font-size:11.17px;line-height:11.17px;color:#8c8c8c;transform:scaleX(1.2398);font-weight:bold;">7</div>
<div class="t" style="left:639.21px;top:156.95px;font-size:11.73px;line-height:11.73px;color:#8c8c8c;transform:scaleX(1.0274);">Mem</div>
<div class="t" style="left:648.58px;top:169.61px;font-size:11.17px;line-height:11.17px;color:#8c8c8c;transform:scaleX(1.1785);font-weight:bold;">8</div>
<div class="t" style="left:673.21px;top:156.95px;font-size:11.73px;line-height:11.73px;color:#8c8c8c;transform:scaleX(1.0274);">Mem</div>
<div class="t" style="left:682.53px;top:169.61px;font-size:11.17px;line-height:11.17px;color:#8c8c8c;transform:scaleX(1.2010);font-weight:bold;">9</div>
<div class="t" style="left:708.21px;top:156.95px;font-size:11.73px;line-height:11.73px;color:#8c8c8c;transform:scaleX(1.0274);">Mem</div>
<div class="t" style="left:717.41px;top:169.61px;font-size:11.17px;line-height:11.17px;color:#8c8c8c;transform:scaleX(0.8433);font-weight:bold;">10</div>
<div class="t" style="left:742.21px;top:156.95px;font-size:11.73px;line-height:11.73px;color:#8c8c8c;transform:scaleX(1.0274);">Mem</div>
<div class="t" style="left:751.41px;top:169.61px;font-size:11.17px;line-height:11.17px;color:#8c8c8c;transform:scaleX(0.8324);font-weight:bold;">11</div>
<div class="t" style="left:777.21px;top:156.95px;font-size:11.73px;line-height:11.73px;color:#8c8c8c;transform:scaleX(1.0274);">Mem</div>
<div class="t" style="left:786.41px;top:169.61px;font-size:11.17px;line-height:11.17px;color:#8c8c8c;transform:scaleX(0.8424);font-weight:bold;">12</div>
<div class="t" style="left:811.21px;top:156.95px;font-size:11.73px;line-height:11.73px;color:#8c8c8c;transform:scaleX(1.0274);">Mem</div>
<div class="t" style="left:820.41px;top:169.61px;font-size:11.17px;line-height:11.17px;color:#8c8c8c;transform:scaleX(0.8392);font-weight:bold;">13</div>
<div class="t" style="left:846.21px;top:156.95px;font-size:11.73px;line-height:11.73px;color:#8c8c8c;transform:scaleX(1.0274);">Mem</div>
<div class="t" style="left:855.43px;top:169.61px;font-size:11.17px;line-height:11.17px;color:#8c8c8c;transform:scaleX(0.8145);font-weight:bold;">14</div>
<div class="t" style="left:880.21px;top:156.95px;font-size:11.73px;line-height:11.73px;color:#8c8c8c;transform:scaleX(1.0274);">Mem</div>
<div class="t" style="left:889.41px;top:169.61px;font-size:11.17px;line-height:11.17px;color:#8c8c8c;transform:scaleX(0.8324);font-weight:bold;">15</div>
<div class="t" style="left:914.21px;top:156.95px;font-size:11.73px;line-height:11.73px;color:#8c8c8c;transform:scaleX(1.0274);">Mem</div>
<div class="t" style="left:923.41px;top:169.61px;font-size:11.17px;line-height:11.17px;color:#8c8c8c;transform:scaleX(0.8392);font-weight:bold;">16</div>
<div class="t" style="left:949.21px;top:156.95px;font-size:11.73px;line-height:11.73px;color:#8c8c8c;transform:scaleX(1.0274);">Mem</div>
<div class="t" style="left:958.40px;top:169.61px;font-size:11.17px;line-height:11.17px;color:#8c8c8c;transform:scaleX(0.8457);font-weight:bold;">17</div>
<div class="t" style="left:983.21px;top:156.95px;font-size:11.73px;line-height:11.73px;color:#8c8c8c;transform:scaleX(1.0274);">Mem</div>
<div class="t" style="left:992.41px;top:169.61px;font-size:11.17px;line-height:11.17px;color:#8c8c8c;transform:scaleX(0.8348);font-weight:bold;">18</div>
<div class="t" style="left:1018.21px;top:156.95px;font-size:11.73px;line-height:11.73px;color:#8c8c8c;transform:scaleX(1.0274);">Mem</div>
<div class="t" style="left:1027.41px;top:169.61px;font-size:11.17px;line-height:11.17px;color:#8c8c8c;transform:scaleX(0.8400);font-weight:bold;">19</div>
<div class="t" style="left:1052.21px;top:156.95px;font-size:11.73px;line-height:11.73px;color:#8c8c8c;transform:scaleX(1.0274);">Mem</div>
<div class="t" style="left:1061.68px;top:169.61px;font-size:11.17px;line-height:11.17px;color:#8c8c8c;transform:scaleX(0.8202);font-weight:bold;">20</div>
<div class="r" style="left:1444px;top:198px;width:142px;height:31px;background:#dadada;"></div>
<div class="t" style="left:1450.43px;top:198.21px;font-size:32.37px;line-height:32.37px;color:#404040;transform:scaleX(0.9833);font-family:'Liberation Serif',sans-serif;">True</div>
<div class="t" style="left:1511.91px;top:199.36px;font-size:31.01px;line-height:31.01px;color:#ff0033;transform:scaleX(1.0847);font-weight:bold;font-style:italic;">RTA</div>
<div class="t" style="left:453.70px;top:861.21px;font-size:18.44px;line-height:18.44px;color:#505050;transform:scaleX(1.1907);">2</div>
<div class="t" style="left:494.28px;top:861.21px;font-size:18.44px;line-height:18.44px;color:#505050;transform:scaleX(0.9979);">ms/DIV</div>
<div class="t" style="left:1030.78px;top:861.21px;font-size:18.44px;line-height:18.44px;color:#505050;transform:scaleX(1.0008);">0.2</div>
<div class="t" style="left:1081.42px;top:861.21px;font-size:18.44px;line-height:18.44px;color:#505050;transform:scaleX(0.9651);">Volts/DIV</div>
<div class="t" style="left:1847.69px;top:1054.68px;font-size:14.66px;line-height:14.66px;color:#000;transform:scaleX(0.8792);font-weight:bold;">1</div></body></html>
